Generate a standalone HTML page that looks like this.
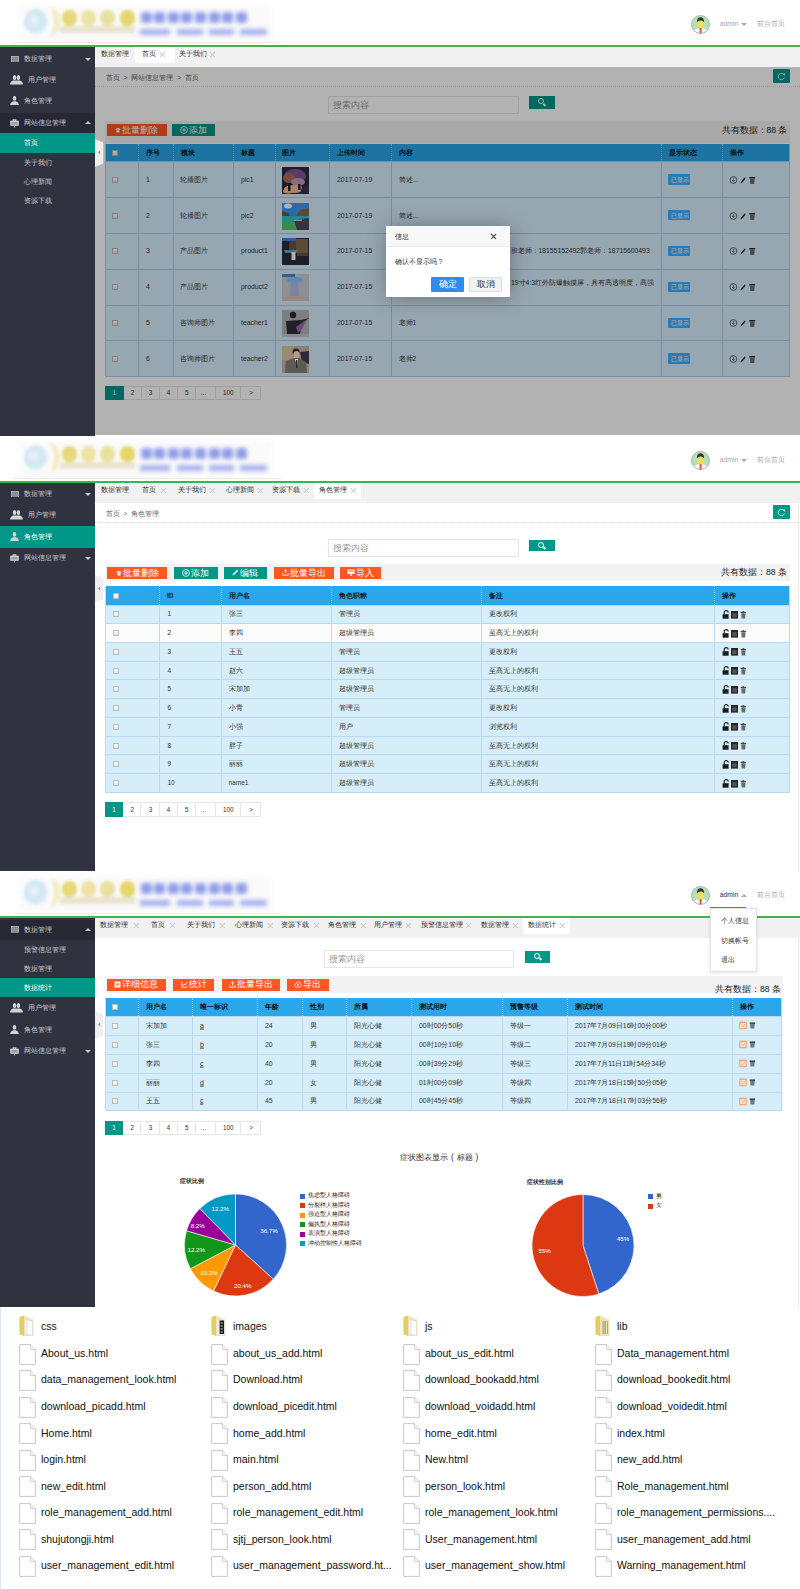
<!DOCTYPE html><html><head><meta charset="utf-8"><style>
*{margin:0;padding:0;box-sizing:border-box}
html,body{width:800px;height:1589px;overflow:hidden;background:#fff;font-family:"Liberation Sans",sans-serif;color:#333}
div{position:absolute}
.t{white-space:nowrap;transform:translateY(-50%);line-height:1}
</style></head><body>
<div style="left:0;top:0px;width:290px;height:45px;"><div style="left:20px;top:5px;width:252px;height:36px;background:#fafafa;filter:blur(2px)"></div><div style="left:13px;top:41.5px;width:268px;height:1px;background:#e6efe6"></div><div style="left:0;top:0;width:290px;height:45px;filter:blur(1.6px)"><div style="left:24px;top:9px;width:24px;height:25px;border-radius:50%;background:radial-gradient(circle at 40% 45%,#e8f3f9 0,#d0e6f3 45%,#dcedf6 65%,rgba(255,255,255,0) 100%)"></div><div style="left:38px;top:7px;width:22px;height:29px;border-radius:50%;border-right:6px solid #f2ebc0"></div><div style="left:61.5px;top:10px;width:15px;height:15.5px;border-radius:45%;background:#e6d97a"></div><div style="left:81.2px;top:10px;width:15px;height:15.5px;border-radius:45%;background:#ede3a4"></div><div style="left:99.5px;top:10px;width:15px;height:15.5px;border-radius:45%;background:#eae09e"></div><div style="left:119.5px;top:10px;width:15px;height:15.5px;border-radius:45%;background:#e5d66c"></div><div style="left:60px;top:26px;width:75px;height:7px;background:#e9e4d0"></div></div><div style="left:0;top:0;width:290px;height:45px;filter:blur(2px)"><div style="left:140.5px;top:11.5px;width:11px;height:11.5px;border-radius:3px;background:#8f9de9"></div><div style="left:154.1px;top:11.5px;width:11px;height:11.5px;border-radius:3px;background:#8f9de9"></div><div style="left:167.7px;top:11.5px;width:11px;height:11.5px;border-radius:3px;background:#8f9de9"></div><div style="left:181.3px;top:11.5px;width:11px;height:11.5px;border-radius:3px;background:#8f9de9"></div><div style="left:194.9px;top:11.5px;width:11px;height:11.5px;border-radius:3px;background:#8f9de9"></div><div style="left:208.5px;top:11.5px;width:11px;height:11.5px;border-radius:3px;background:#8f9de9"></div><div style="left:222.1px;top:11.5px;width:11px;height:11.5px;border-radius:3px;background:#8f9de9"></div><div style="left:235.7px;top:11.5px;width:11px;height:11.5px;border-radius:3px;background:#8f9de9"></div><div style="left:140px;top:28.5px;width:30px;height:6px;background:#a8b2ee"></div><div style="left:177px;top:28.5px;width:26px;height:6px;background:#a8b2ee"></div><div style="left:209px;top:28.5px;width:25px;height:6px;background:#a8b2ee"></div><div style="left:240px;top:28.5px;width:27px;height:6px;background:#a8b2ee"></div></div></div><svg style="position:absolute;left:691px;top:15px" width="19" height="19" viewBox="0 0 19 19"><defs><clipPath id="av0"><circle cx="9.5" cy="9.5" r="9"/></clipPath></defs><circle cx="9.5" cy="9.5" r="9" fill="#b6e0b4"/><g clip-path="url(#av0)"><path d="M1,19 Q2,13.5 9.5,13 Q17,13.5 18,19 Z" fill="#f4f8fa"/><rect x="8.6" y="13" width="2" height="6" fill="#f0521e"/><ellipse cx="9.5" cy="9" rx="3.2" ry="3.8" fill="#f2dc5a"/><path d="M5.8,7.2 Q6,2.2 9.5,2.2 Q13,2.2 13.2,7.2 Q11.5,5.2 9.5,5.6 Q7.5,5.2 5.8,7.2 Z" fill="#1f3a44"/></g><circle cx="9.5" cy="9.5" r="9" fill="none" stroke="#9aa7b0" stroke-width="0.8"/></svg><div class="t" style="left:719.8px;top:24px;font-size:6.8px;color:#a8a8a8">admin</div><div style="left:741px;top:23px;width:0;height:0;border-left:3px solid transparent;border-right:3px solid transparent;border-top:3px solid #aaa"></div><div class="t" style="left:756.5px;top:24px;font-size:6.8px;color:#aaa">前台首页</div><div style="left:0px;top:45px;width:800px;height:2px;background:#3db54a"></div><div style="left:0px;top:47px;width:95px;height:389px;background:#30323f"></div><div class="t" style="left:24px;top:58.8px;font-size:6.6px;color:#c6c7cc">数据管理</div><svg style="position:absolute;left:10.5px;top:55.5px" width="8" height="6.6" viewBox="0 0 8 6.6"><rect x="0.4" y="0.4" width="7.2" height="5.8" fill="#5a5c66" stroke="#c8c8c8" stroke-width="0.8"/><path d="M2.2,0.4 L2.2,6.2 M4,0.4 L4,6.2 M5.8,0.4 L5.8,6.2 M0.4,2.3 L7.6,2.3 M0.4,4.3 L7.6,4.3" stroke="#b8b8b8" stroke-width="0.6"/></svg><div style="left:85px;top:57.8px;width:0;height:0;border-left:3px solid transparent;border-right:3px solid transparent;border-top:3px solid #ccc"></div><div class="t" style="left:28px;top:80px;font-size:6.6px;color:#c6c7cc">用户管理</div><svg style="position:absolute;left:10px;top:75px" width="13" height="9.5" viewBox="0 0 13 9.5"><g fill="#d4d4d4"><ellipse cx="4.6" cy="2.6" rx="1.7" ry="2.6"/><ellipse cx="8.4" cy="2.6" rx="1.7" ry="2.6"/><path d="M0,9.5 Q0.5,6.2 3.2,5.6 L6.5,5.4 L9.8,5.6 Q12.5,6.2 13,9.5 Z"/></g></svg><div class="t" style="left:24px;top:101px;font-size:6.6px;color:#c6c7cc">角色管理</div><svg style="position:absolute;left:9.8px;top:96.2px" width="9" height="9" viewBox="0 0 9 9"><g fill="#d4d4d4"><ellipse cx="4.5" cy="2.4" rx="1.8" ry="2.4"/><path d="M0,9 Q0.6,5.8 3.2,5.3 L5.8,5.3 Q8.4,5.8 9,9 Z"/></g></svg><div style="left:0px;top:112.5px;width:95px;height:20px;background:#262834"></div><div class="t" style="left:24px;top:122.5px;font-size:6.6px;color:#c6c7cc">网站信息管理</div><svg style="position:absolute;left:10px;top:118.5px" width="9" height="9" viewBox="0 0 9 9"><rect x="3" y="0.3" width="3" height="1.4" fill="none" stroke="#ddd" stroke-width="0.6"/><rect x="0.3" y="1.7" width="8.4" height="5" fill="#e6e6e6"/><rect x="1.3" y="2.7" width="6.4" height="3" fill="#9a9ca6"/><rect x="4" y="6.7" width="1" height="1.8" fill="#ddd"/></svg><div style="left:85px;top:120.5px;width:0;height:0;border-left:3px solid transparent;border-right:3px solid transparent;border-bottom:3px solid #ccc"></div><div style="left:0px;top:133.2px;width:95px;height:19.5px;background:#009688"></div><div class="t" style="left:24px;top:143px;font-size:6.6px;color:#fff">首页</div><div class="t" style="left:24px;top:163px;font-size:6.6px;color:#c6c7cc">关于我们</div><div class="t" style="left:24px;top:182px;font-size:6.6px;color:#c6c7cc">心理新闻</div><div class="t" style="left:24px;top:201px;font-size:6.6px;color:#c6c7cc">资源下载</div><div style="left:95px;top:47px;width:705px;height:20px;background:#f1f1f1"></div><div style="left:135px;top:47px;width:39.5px;height:16px;background:#fff"></div><div class="t" style="left:101px;top:54px;font-size:6.5px;color:#333">数据管理</div><div class="t" style="left:142px;top:54px;font-size:6.5px;color:#333">首页</div><div style="left:159.12px;top:53.7px;width:6.760000000000001px;height:0.6px;background:#cdcdcd;transform:rotate(45deg)"></div><div style="left:159.12px;top:53.7px;width:6.760000000000001px;height:0.6px;background:#cdcdcd;transform:rotate(-45deg)"></div><div class="t" style="left:178.5px;top:54px;font-size:6.5px;color:#333">关于我们</div><div style="left:208.62px;top:53.7px;width:6.760000000000001px;height:0.6px;background:#cdcdcd;transform:rotate(45deg)"></div><div style="left:208.62px;top:53.7px;width:6.760000000000001px;height:0.6px;background:#cdcdcd;transform:rotate(-45deg)"></div><div style="left:95px;top:67px;width:705px;height:368.5px;background:#fff"></div><div class="t" style="left:105.5px;top:77.5px;font-size:6.5px;color:#666;word-spacing:2.2px">首页 &gt; 网站信息管理 &gt; 首页</div><div style="left:95px;top:86px;width:705px;height:1px;border-top:1px dotted #ddd"></div><div style="left:773px;top:69px;width:17px;height:14px;background:#009688;border-radius:1px"></div><svg style="position:absolute;left:777px;top:71.5px" width="9" height="9" viewBox="0 0 9 9"><path d="M7.3,3.2 A3.2,3.2 0 1 0 7.4,5.6" fill="none" stroke="#eef" stroke-width="0.9"/><path d="M6.2,1.4 L8.2,1.6 L7.6,3.8 Z" fill="#eef"/></svg><div style="left:328px;top:96.4px;width:190.60000000000002px;height:18.0px;border:1px solid #e6e6e6;background:#fff"></div><div class="t" style="left:333px;top:105.4px;font-size:8.6px;color:#999">搜索内容</div><div style="left:528.7px;top:96px;width:26.299999999999955px;height:12.700000000000003px;background:#009688"></div><div style="left:537.85px;top:98.35px;width:6px;height:6px;border:1.5px solid #fff;border-radius:50%"></div><div style="left:542.85px;top:103.85px;width:3px;height:1.6px;background:#fff;transform:rotate(45deg)"></div><div style="left:105px;top:120.5px;width:684.6px;height:22px;background:#f3f3f3"></div><div style="left:107px;top:124.4px;width:59.80000000000001px;height:11.5px;background:#ff5722;display:flex;align-items:center;justify-content:center;white-space:nowrap;font-size:8.9px;line-height:1;color:#fff"><svg style="display:inline-block;vertical-align:middle;margin-right:1px;position:relative;top:-0.5px" width="6" height="6" viewBox="0 0 6 6"><path d="M0.5,2.2 Q3,0 5.5,2.2 L5,3 Q3,2 1,3 Z" fill="#fff"/><rect x="1.5" y="3.2" width="3" height="2.3" fill="#fff"/></svg>批量删除</div><div style="left:172px;top:124.4px;width:43px;height:11.5px;background:#009688;display:flex;align-items:center;justify-content:center;white-space:nowrap;font-size:8.9px;line-height:1;color:#fff"><svg style="display:inline-block;vertical-align:middle;margin-right:1px;position:relative;top:-0.5px" width="8" height="8" viewBox="0 0 8 8"><circle cx="4" cy="4" r="3.4" fill="none" stroke="#fff" stroke-width="0.8"/><path d="M4,2 L4,6 M2,4 L6,4" stroke="#fff" stroke-width="0.8"/></svg>添加</div><div class="t" style="right:12.5px;top:130px;font-size:8.6px;color:#222">共有数据：88 条</div><div style="left:105px;top:143.6px;width:684.6px;height:18px;background:#2aa6ea"></div><div style="left:105px;top:161.6px;width:684.6px;height:36.0px;background:#d9f0ff"></div><div style="left:105px;top:197.6px;width:684.6px;height:35.80000000000001px;background:#d9f0ff"></div><div style="left:105px;top:233.4px;width:684.6px;height:35.99999999999997px;background:#d9f0ff"></div><div style="left:105px;top:269.4px;width:684.6px;height:35.700000000000045px;background:#d9f0ff"></div><div style="left:105px;top:305.1px;width:684.6px;height:35.599999999999966px;background:#d9f0ff"></div><div style="left:105px;top:340.7px;width:684.6px;height:36.0px;background:#d9f0ff"></div><div style="left:105px;top:161.1px;width:684.6px;height:1px;background:#b4c8ea"></div><div style="left:105px;top:197.1px;width:684.6px;height:1px;background:#b4c8ea"></div><div style="left:105px;top:232.9px;width:684.6px;height:1px;background:#b4c8ea"></div><div style="left:105px;top:268.9px;width:684.6px;height:1px;background:#b4c8ea"></div><div style="left:105px;top:304.6px;width:684.6px;height:1px;background:#b4c8ea"></div><div style="left:105px;top:340.2px;width:684.6px;height:1px;background:#b4c8ea"></div><div style="left:105px;top:376.2px;width:684.6px;height:1px;background:#b4c8ea"></div><div style="left:104.5px;top:161.6px;width:1px;height:215.1px;background:#b4c8ea"></div><div style="left:138.0px;top:161.6px;width:1px;height:215.1px;background:#b4c8ea"></div><div style="left:173.0px;top:161.6px;width:1px;height:215.1px;background:#b4c8ea"></div><div style="left:233.0px;top:161.6px;width:1px;height:215.1px;background:#b4c8ea"></div><div style="left:274.5px;top:161.6px;width:1px;height:215.1px;background:#b4c8ea"></div><div style="left:329.0px;top:161.6px;width:1px;height:215.1px;background:#b4c8ea"></div><div style="left:391.0px;top:161.6px;width:1px;height:215.1px;background:#b4c8ea"></div><div style="left:661.0px;top:161.6px;width:1px;height:215.1px;background:#b4c8ea"></div><div style="left:722.0px;top:161.6px;width:1px;height:215.1px;background:#b4c8ea"></div><div style="left:789.1px;top:161.6px;width:1px;height:215.1px;background:#b4c8ea"></div><div style="left:138.0px;top:143.6px;width:0px;height:18px;border-left:1px dotted rgba(255,255,255,0.45)"></div><div style="left:173.0px;top:143.6px;width:0px;height:18px;border-left:1px dotted rgba(255,255,255,0.45)"></div><div style="left:233.0px;top:143.6px;width:0px;height:18px;border-left:1px dotted rgba(255,255,255,0.45)"></div><div style="left:274.5px;top:143.6px;width:0px;height:18px;border-left:1px dotted rgba(255,255,255,0.45)"></div><div style="left:329.0px;top:143.6px;width:0px;height:18px;border-left:1px dotted rgba(255,255,255,0.45)"></div><div style="left:391.0px;top:143.6px;width:0px;height:18px;border-left:1px dotted rgba(255,255,255,0.45)"></div><div style="left:661.0px;top:143.6px;width:0px;height:18px;border-left:1px dotted rgba(255,255,255,0.45)"></div><div style="left:722.0px;top:143.6px;width:0px;height:18px;border-left:1px dotted rgba(255,255,255,0.45)"></div><div style="left:104.5px;top:143.6px;width:1px;height:233.1px;background:#b4c8ea"></div><div style="left:789.1px;top:143.6px;width:1px;height:233.1px;background:#b4c8ea"></div><div class="t" style="left:145.8px;top:152.6px;font-size:6.5px;color:#111;font-weight:bold">序号</div><div class="t" style="left:180.8px;top:152.6px;font-size:6.5px;color:#111;font-weight:bold">模块</div><div class="t" style="left:240.8px;top:152.6px;font-size:6.5px;color:#111;font-weight:bold">标题</div><div class="t" style="left:282.3px;top:152.6px;font-size:6.5px;color:#111;font-weight:bold">图片</div><div class="t" style="left:336.8px;top:152.6px;font-size:6.5px;color:#111;font-weight:bold">上传时间</div><div class="t" style="left:398.8px;top:152.6px;font-size:6.5px;color:#111;font-weight:bold">内容</div><div class="t" style="left:668.8px;top:152.6px;font-size:6.5px;color:#111;font-weight:bold">显示状态</div><div class="t" style="left:729.8px;top:152.6px;font-size:6.5px;color:#111;font-weight:bold">操作</div><div style="left:112px;top:149.6px;width:6px;height:6px;border:1px solid #bbb;background:linear-gradient(#fff,#e6e6e6)"></div><div style="left:112px;top:176.6px;width:6px;height:6px;border:1px solid #bbb;background:linear-gradient(#fff,#e6e6e6)"></div><div class="t" style="left:146px;top:179.6px;font-size:6.9px;color:#333">1</div><div class="t" style="left:179.5px;top:179.6px;font-size:6.8px;color:#333">轮播图片</div><div class="t" style="left:241px;top:179.6px;font-size:6.9px;color:#333">pic1</div><div class="t" style="left:337px;top:179.6px;font-size:6.9px;color:#333">2017-07-19</div><div class="t" style="left:398.5px;top:179.6px;font-size:6.6px;color:#333">简述...</div><div style="left:668.3px;top:174.29999999999998px;width:22.2px;height:10.3px;background:#42b0ff;border-radius:1px"></div><div class="t" style="left:670.5px;top:179.6px;font-size:6.1px;color:#fff">已显示</div><svg style="position:absolute;left:729px;top:174.6px" width="28" height="10" viewBox="0 0 28 10"><circle cx="4.4" cy="5" r="3.4" fill="none" stroke="#444" stroke-width="0.8"/><path d="M4.4,2.8 L4.4,6.2 M3,5 L4.4,6.5 L5.8,5" fill="none" stroke="#444" stroke-width="0.7"/><path d="M11.5,8.6 L12,6.8 L15.6,2.6 L16.6,3.5 L13,7.7 Z" fill="#1a1a1a"/><rect x="20.3" y="2" width="5.9" height="1.4" fill="#222"/><path d="M20.8,3.6 L25.7,3.6 L25.2,8.9 L21.3,8.9 Z" fill="#6d6d6d"/></svg><div style="left:112px;top:212.5px;width:6px;height:6px;border:1px solid #bbb;background:linear-gradient(#fff,#e6e6e6)"></div><div class="t" style="left:146px;top:215.5px;font-size:6.9px;color:#333">2</div><div class="t" style="left:179.5px;top:215.5px;font-size:6.8px;color:#333">轮播图片</div><div class="t" style="left:241px;top:215.5px;font-size:6.9px;color:#333">pic2</div><div class="t" style="left:337px;top:215.5px;font-size:6.9px;color:#333">2017-07-19</div><div class="t" style="left:398.5px;top:215.5px;font-size:6.6px;color:#333">简述...</div><div style="left:668.3px;top:210.2px;width:22.2px;height:10.3px;background:#42b0ff;border-radius:1px"></div><div class="t" style="left:670.5px;top:215.5px;font-size:6.1px;color:#fff">已显示</div><svg style="position:absolute;left:729px;top:210.5px" width="28" height="10" viewBox="0 0 28 10"><circle cx="4.4" cy="5" r="3.4" fill="none" stroke="#444" stroke-width="0.8"/><path d="M4.4,2.8 L4.4,6.2 M3,5 L4.4,6.5 L5.8,5" fill="none" stroke="#444" stroke-width="0.7"/><path d="M11.5,8.6 L12,6.8 L15.6,2.6 L16.6,3.5 L13,7.7 Z" fill="#1a1a1a"/><rect x="20.3" y="2" width="5.9" height="1.4" fill="#222"/><path d="M20.8,3.6 L25.7,3.6 L25.2,8.9 L21.3,8.9 Z" fill="#6d6d6d"/></svg><div style="left:112px;top:248.39999999999998px;width:6px;height:6px;border:1px solid #bbb;background:linear-gradient(#fff,#e6e6e6)"></div><div class="t" style="left:146px;top:251.39999999999998px;font-size:6.9px;color:#333">3</div><div class="t" style="left:179.5px;top:251.39999999999998px;font-size:6.8px;color:#333">产品图片</div><div class="t" style="left:241px;top:251.39999999999998px;font-size:6.9px;color:#333">product1</div><div class="t" style="left:337px;top:251.39999999999998px;font-size:6.9px;color:#333">2017-07-15</div><div class="t" style="left:398.5px;top:251.39999999999998px;font-size:6.6px;color:#333">阳光心理健康咨询中心联系</div><div class="t" style="left:510.5px;top:251.39999999999998px;font-size:6.8px;color:#333">班老师：18155152492郭老师：18715600493</div><div style="left:668.3px;top:246.09999999999997px;width:22.2px;height:10.3px;background:#42b0ff;border-radius:1px"></div><div class="t" style="left:670.5px;top:251.39999999999998px;font-size:6.1px;color:#fff">已显示</div><svg style="position:absolute;left:729px;top:246.39999999999998px" width="28" height="10" viewBox="0 0 28 10"><circle cx="4.4" cy="5" r="3.4" fill="none" stroke="#444" stroke-width="0.8"/><path d="M4.4,2.8 L4.4,6.2 M3,5 L4.4,6.5 L5.8,5" fill="none" stroke="#444" stroke-width="0.7"/><path d="M11.5,8.6 L12,6.8 L15.6,2.6 L16.6,3.5 L13,7.7 Z" fill="#1a1a1a"/><rect x="20.3" y="2" width="5.9" height="1.4" fill="#222"/><path d="M20.8,3.6 L25.7,3.6 L25.2,8.9 L21.3,8.9 Z" fill="#6d6d6d"/></svg><div style="left:112px;top:284.25px;width:6px;height:6px;border:1px solid #bbb;background:linear-gradient(#fff,#e6e6e6)"></div><div class="t" style="left:146px;top:287.25px;font-size:6.9px;color:#333">4</div><div class="t" style="left:179.5px;top:287.25px;font-size:6.8px;color:#333">产品图片</div><div class="t" style="left:241px;top:287.25px;font-size:6.9px;color:#333">product2</div><div class="t" style="left:337px;top:287.25px;font-size:6.9px;color:#333">2017-07-15</div><div class="t" style="left:398.5px;top:283.25px;font-size:6.6px;color:#333">产品简述：本产品采用</div><div class="t" style="left:511px;top:282.95px;font-size:6.8px;color:#333">19寸4:3红外防爆触摸屏，具有高透明度，高强</div><div style="left:668.3px;top:281.95px;width:22.2px;height:10.3px;background:#42b0ff;border-radius:1px"></div><div class="t" style="left:670.5px;top:287.25px;font-size:6.1px;color:#fff">已显示</div><svg style="position:absolute;left:729px;top:282.25px" width="28" height="10" viewBox="0 0 28 10"><circle cx="4.4" cy="5" r="3.4" fill="none" stroke="#444" stroke-width="0.8"/><path d="M4.4,2.8 L4.4,6.2 M3,5 L4.4,6.5 L5.8,5" fill="none" stroke="#444" stroke-width="0.7"/><path d="M11.5,8.6 L12,6.8 L15.6,2.6 L16.6,3.5 L13,7.7 Z" fill="#1a1a1a"/><rect x="20.3" y="2" width="5.9" height="1.4" fill="#222"/><path d="M20.8,3.6 L25.7,3.6 L25.2,8.9 L21.3,8.9 Z" fill="#6d6d6d"/></svg><div style="left:112px;top:319.9px;width:6px;height:6px;border:1px solid #bbb;background:linear-gradient(#fff,#e6e6e6)"></div><div class="t" style="left:146px;top:322.9px;font-size:6.9px;color:#333">5</div><div class="t" style="left:179.5px;top:322.9px;font-size:6.8px;color:#333">咨询师图片</div><div class="t" style="left:241px;top:322.9px;font-size:6.9px;color:#333">teacher1</div><div class="t" style="left:337px;top:322.9px;font-size:6.9px;color:#333">2017-07-15</div><div class="t" style="left:398.5px;top:322.9px;font-size:6.6px;color:#333">老师1</div><div style="left:668.3px;top:317.59999999999997px;width:22.2px;height:10.3px;background:#42b0ff;border-radius:1px"></div><div class="t" style="left:670.5px;top:322.9px;font-size:6.1px;color:#fff">已显示</div><svg style="position:absolute;left:729px;top:317.9px" width="28" height="10" viewBox="0 0 28 10"><circle cx="4.4" cy="5" r="3.4" fill="none" stroke="#444" stroke-width="0.8"/><path d="M4.4,2.8 L4.4,6.2 M3,5 L4.4,6.5 L5.8,5" fill="none" stroke="#444" stroke-width="0.7"/><path d="M11.5,8.6 L12,6.8 L15.6,2.6 L16.6,3.5 L13,7.7 Z" fill="#1a1a1a"/><rect x="20.3" y="2" width="5.9" height="1.4" fill="#222"/><path d="M20.8,3.6 L25.7,3.6 L25.2,8.9 L21.3,8.9 Z" fill="#6d6d6d"/></svg><div style="left:112px;top:355.7px;width:6px;height:6px;border:1px solid #bbb;background:linear-gradient(#fff,#e6e6e6)"></div><div class="t" style="left:146px;top:358.7px;font-size:6.9px;color:#333">6</div><div class="t" style="left:179.5px;top:358.7px;font-size:6.8px;color:#333">咨询师图片</div><div class="t" style="left:241px;top:358.7px;font-size:6.9px;color:#333">teacher2</div><div class="t" style="left:337px;top:358.7px;font-size:6.9px;color:#333">2017-07-15</div><div class="t" style="left:398.5px;top:358.7px;font-size:6.6px;color:#333">老师2</div><div style="left:668.3px;top:353.4px;width:22.2px;height:10.3px;background:#42b0ff;border-radius:1px"></div><div class="t" style="left:670.5px;top:358.7px;font-size:6.1px;color:#fff">已显示</div><svg style="position:absolute;left:729px;top:353.7px" width="28" height="10" viewBox="0 0 28 10"><circle cx="4.4" cy="5" r="3.4" fill="none" stroke="#444" stroke-width="0.8"/><path d="M4.4,2.8 L4.4,6.2 M3,5 L4.4,6.5 L5.8,5" fill="none" stroke="#444" stroke-width="0.7"/><path d="M11.5,8.6 L12,6.8 L15.6,2.6 L16.6,3.5 L13,7.7 Z" fill="#1a1a1a"/><rect x="20.3" y="2" width="5.9" height="1.4" fill="#222"/><path d="M20.8,3.6 L25.7,3.6 L25.2,8.9 L21.3,8.9 Z" fill="#6d6d6d"/></svg><div style="left:105px;top:386px;width:18.5px;height:14px;background:#009688"></div><div class="t" style="left:112.5px;top:393.0px;font-size:6.3px;color:#fff">1</div><div style="left:123.5px;top:386px;width:18.0px;height:14px;border:1px solid #e6e6e6;border-left:0;background:#fff"></div><div class="t" style="left:130.75px;top:393.0px;font-size:6.3px;color:#333">2</div><div style="left:141.5px;top:386px;width:18.0px;height:14px;border:1px solid #e6e6e6;border-left:0;background:#fff"></div><div class="t" style="left:148.75px;top:393.0px;font-size:6.3px;color:#333">3</div><div style="left:159.5px;top:386px;width:18.0px;height:14px;border:1px solid #e6e6e6;border-left:0;background:#fff"></div><div class="t" style="left:166.75px;top:393.0px;font-size:6.3px;color:#333">4</div><div style="left:177.5px;top:386px;width:18.30000000000001px;height:14px;border:1px solid #e6e6e6;border-left:0;background:#fff"></div><div class="t" style="left:184.9px;top:393.0px;font-size:6.3px;color:#333">5</div><div style="left:195.8px;top:386px;width:20.19999999999999px;height:14px;border:1px solid #e6e6e6;border-left:0;background:#fff"></div><div class="t" style="left:200.65px;top:393.0px;font-size:6.3px;color:#333">...</div><div style="left:216px;top:386px;width:24.599999999999994px;height:14px;border:1px solid #e6e6e6;border-left:0;background:#fff"></div><div class="t" style="left:223.05px;top:393.0px;font-size:6.3px;color:#333">100</div><div style="left:240.6px;top:386px;width:20.700000000000017px;height:14px;border:1px solid #e6e6e6;border-left:0;background:#fff"></div><div class="t" style="left:249.2px;top:393.0px;font-size:6.3px;color:#333">&gt;</div><div style="left:95px;top:67px;width:705px;height:368px;background:rgba(0,0,0,0.3)"></div><svg style="position:absolute;left:282.2px;top:166.5px" width="27" height="27" viewBox="0 0 27 27"><rect width="27" height="27" fill="#1e1d2e"/><ellipse cx="13" cy="9" rx="11" ry="7" fill="#5a3a66"/><ellipse cx="7" cy="11" rx="6" ry="5" fill="#7a4a3e"/><ellipse cx="16" cy="15" rx="7" ry="4" fill="#8a6a80"/><ellipse cx="12" cy="22" rx="10" ry="4" fill="#a8846a"/><ellipse cx="6" cy="24" rx="5" ry="2.5" fill="#c8804a"/><rect x="6" y="16" width="2.5" height="8" fill="#151520"/><rect x="16" y="17" width="2.5" height="6" fill="#151520"/><path d="M20,20 L27,16 L27,27 L18,27 Z" fill="#242232"/></svg><svg style="position:absolute;left:282.2px;top:202.5px" width="27" height="27" viewBox="0 0 27 27"><rect width="27" height="27" fill="#2a6aa8"/><ellipse cx="6" cy="3" rx="4" ry="2.5" fill="#a8b4c0"/><path d="M0,8 L6,10 L9,14 L0,14 Z" fill="#4a3a34"/><path d="M14,13 L18,7 L27,5 L27,14 Z" fill="#5e4a34"/><rect x="0" y="13" width="27" height="8" fill="#1f8a8a"/><path d="M0,18 L14,19 L16,27 L0,27 Z" fill="#3a8a4a"/><path d="M12,17 L27,15 L27,27 L15,27 Z" fill="#38323c"/><rect x="12" y="16.5" width="8" height="1.5" fill="#8a8a90"/></svg><svg style="position:absolute;left:282.2px;top:238.3px" width="27" height="27" viewBox="0 0 27 27"><rect width="27" height="27" fill="#1c1e2c"/><rect x="0" y="0" width="14" height="3" fill="#2a5aa0"/><rect x="14" y="1" width="12" height="14" fill="#5a4a38"/><rect x="7" y="3" width="7" height="9" fill="#4a3a30"/><path d="M2,12 L16,12 L14,15 L3,15 Z" fill="#3a7a8a"/><rect x="9.5" y="14" width="4" height="8" fill="#b8b098"/><rect x="15" y="15" width="11" height="3" fill="#4a3a2c"/></svg><svg style="position:absolute;left:282.2px;top:274.29999999999995px" width="27" height="27" viewBox="0 0 27 27"><rect width="27" height="27" fill="#8c9096"/><rect x="0" y="0" width="13" height="3" fill="#3a5a90"/><ellipse cx="13" cy="6" rx="8" ry="3" fill="#5a8ab0"/><path d="M9,8 L16,8 L17,22 L8,22 Z" fill="#7a84a0"/><rect x="0" y="22" width="27" height="5" fill="#988a80"/></svg><svg style="position:absolute;left:282.2px;top:310.0px" width="27" height="27" viewBox="0 0 27 27"><rect width="27" height="27" fill="#7e7e80"/><circle cx="11" cy="5" r="3.2" fill="#1e1c26"/><path d="M4,11 L19,10 L27,8 L20,14 L18,24 L5,24 Z" fill="#20202a"/><path d="M14,17 L25,9 L20,19 L16,23 Z" fill="#6a4a78"/><rect x="0" y="24" width="27" height="3" fill="#8a8a8c"/></svg><svg style="position:absolute;left:282.2px;top:345.59999999999997px" width="27" height="27" viewBox="0 0 27 27"><rect width="27" height="27" fill="#8a8070"/><rect x="0" y="0" width="12" height="14" fill="#9a8a70"/><path d="M18,6 L27,5 L27,18 L20,16 Z" fill="#2a2a34"/><circle cx="14" cy="6" r="3.5" fill="#1e1e26"/><ellipse cx="14.5" cy="9" rx="3.2" ry="4" fill="#b89888"/><path d="M3,27 L4,15 L12,12 L17,12 L24,16 L25,27 Z" fill="#5c5a52"/><path d="M13,13 L16,13 L15,20 Z" fill="#d8d8d8"/><rect x="14" y="14" width="1.3" height="8" fill="#2a2a30"/></svg><svg style="position:absolute;left:95px;top:139px" width="9" height="28" viewBox="0 0 9 28"><path d="M0,0 L8.2,3.5 L8.2,24.5 L0,28 Z" fill="#efefef"/><path d="M2.8,13.5 L5.2,11.2 L5.2,15.8 Z" fill="#a0a0a0"/></svg><div style="left:386px;top:226px;width:123.5px;height:71px;background:#fff;box-shadow:1px 1px 20px rgba(0,0,0,0.3)"></div><div style="left:386px;top:226px;width:123.5px;height:21px;background:#f8f8f8;border-bottom:1px solid #eee"></div><div class="t" style="left:395px;top:236.5px;font-size:6.6px;color:#333">信息</div><div style="left:490.425px;top:236.05px;width:7.15px;height:0.9px;background:#333;transform:rotate(45deg)"></div><div style="left:490.425px;top:236.05px;width:7.15px;height:0.9px;background:#333;transform:rotate(-45deg)"></div><div class="t" style="left:395px;top:262px;font-size:6.8px;color:#333">确认不显示吗？</div><div style="left:431.3px;top:277px;width:32.5px;height:14.5px;background:#2e8ded;border-radius:1px"></div><div class="t" style="left:438.5px;top:284.3px;font-size:8.9px;color:#fff">确定</div><div style="left:469px;top:277px;width:32.5px;height:14.5px;background:#f1f1f1;border:1px solid #dedede;border-radius:1px"></div><div class="t" style="left:476.5px;top:284.3px;font-size:8.9px;color:#333">取消</div>
<div style="left:0px;top:436px;width:800px;height:435px;background:#fff"></div><div style="left:0;top:436px;width:290px;height:45px;"><div style="left:20px;top:5px;width:252px;height:36px;background:#fafafa;filter:blur(2px)"></div><div style="left:13px;top:41.5px;width:268px;height:1px;background:#e6efe6"></div><div style="left:0;top:0;width:290px;height:45px;filter:blur(1.6px)"><div style="left:24px;top:9px;width:24px;height:25px;border-radius:50%;background:radial-gradient(circle at 40% 45%,#e8f3f9 0,#d0e6f3 45%,#dcedf6 65%,rgba(255,255,255,0) 100%)"></div><div style="left:38px;top:7px;width:22px;height:29px;border-radius:50%;border-right:6px solid #f2ebc0"></div><div style="left:61.5px;top:10px;width:15px;height:15.5px;border-radius:45%;background:#e6d97a"></div><div style="left:81.2px;top:10px;width:15px;height:15.5px;border-radius:45%;background:#ede3a4"></div><div style="left:99.5px;top:10px;width:15px;height:15.5px;border-radius:45%;background:#eae09e"></div><div style="left:119.5px;top:10px;width:15px;height:15.5px;border-radius:45%;background:#e5d66c"></div><div style="left:60px;top:26px;width:75px;height:7px;background:#e9e4d0"></div></div><div style="left:0;top:0;width:290px;height:45px;filter:blur(2px)"><div style="left:140.5px;top:11.5px;width:11px;height:11.5px;border-radius:3px;background:#8f9de9"></div><div style="left:154.1px;top:11.5px;width:11px;height:11.5px;border-radius:3px;background:#8f9de9"></div><div style="left:167.7px;top:11.5px;width:11px;height:11.5px;border-radius:3px;background:#8f9de9"></div><div style="left:181.3px;top:11.5px;width:11px;height:11.5px;border-radius:3px;background:#8f9de9"></div><div style="left:194.9px;top:11.5px;width:11px;height:11.5px;border-radius:3px;background:#8f9de9"></div><div style="left:208.5px;top:11.5px;width:11px;height:11.5px;border-radius:3px;background:#8f9de9"></div><div style="left:222.1px;top:11.5px;width:11px;height:11.5px;border-radius:3px;background:#8f9de9"></div><div style="left:235.7px;top:11.5px;width:11px;height:11.5px;border-radius:3px;background:#8f9de9"></div><div style="left:140px;top:28.5px;width:30px;height:6px;background:#a8b2ee"></div><div style="left:177px;top:28.5px;width:26px;height:6px;background:#a8b2ee"></div><div style="left:209px;top:28.5px;width:25px;height:6px;background:#a8b2ee"></div><div style="left:240px;top:28.5px;width:27px;height:6px;background:#a8b2ee"></div></div></div><svg style="position:absolute;left:691px;top:451px" width="19" height="19" viewBox="0 0 19 19"><defs><clipPath id="av436"><circle cx="9.5" cy="9.5" r="9"/></clipPath></defs><circle cx="9.5" cy="9.5" r="9" fill="#b6e0b4"/><g clip-path="url(#av436)"><path d="M1,19 Q2,13.5 9.5,13 Q17,13.5 18,19 Z" fill="#f4f8fa"/><rect x="8.6" y="13" width="2" height="6" fill="#f0521e"/><ellipse cx="9.5" cy="9" rx="3.2" ry="3.8" fill="#f2dc5a"/><path d="M5.8,7.2 Q6,2.2 9.5,2.2 Q13,2.2 13.2,7.2 Q11.5,5.2 9.5,5.6 Q7.5,5.2 5.8,7.2 Z" fill="#1f3a44"/></g><circle cx="9.5" cy="9.5" r="9" fill="none" stroke="#9aa7b0" stroke-width="0.8"/></svg><div class="t" style="left:719.8px;top:460px;font-size:6.8px;color:#a8a8a8">admin</div><div style="left:741px;top:459px;width:0;height:0;border-left:3px solid transparent;border-right:3px solid transparent;border-top:3px solid #aaa"></div><div class="t" style="left:756.5px;top:460px;font-size:6.8px;color:#aaa">前台首页</div><div style="left:0px;top:481px;width:800px;height:2px;background:#3db54a"></div><div style="left:0px;top:483px;width:95px;height:389px;background:#30323f"></div><div class="t" style="left:24px;top:494px;font-size:6.6px;color:#c6c7cc">数据管理</div><svg style="position:absolute;left:10.5px;top:490.7px" width="8" height="6.6" viewBox="0 0 8 6.6"><rect x="0.4" y="0.4" width="7.2" height="5.8" fill="#5a5c66" stroke="#c8c8c8" stroke-width="0.8"/><path d="M2.2,0.4 L2.2,6.2 M4,0.4 L4,6.2 M5.8,0.4 L5.8,6.2 M0.4,2.3 L7.6,2.3 M0.4,4.3 L7.6,4.3" stroke="#b8b8b8" stroke-width="0.6"/></svg><div style="left:85px;top:493px;width:0;height:0;border-left:3px solid transparent;border-right:3px solid transparent;border-top:3px solid #ccc"></div><div class="t" style="left:28px;top:515.2px;font-size:6.6px;color:#c6c7cc">用户管理</div><svg style="position:absolute;left:10px;top:510.20000000000005px" width="13" height="9.5" viewBox="0 0 13 9.5"><g fill="#d4d4d4"><ellipse cx="4.6" cy="2.6" rx="1.7" ry="2.6"/><ellipse cx="8.4" cy="2.6" rx="1.7" ry="2.6"/><path d="M0,9.5 Q0.5,6.2 3.2,5.6 L6.5,5.4 L9.8,5.6 Q12.5,6.2 13,9.5 Z"/></g></svg><div style="left:0px;top:526.0px;width:95px;height:21.7px;background:#009688"></div><div class="t" style="left:24px;top:536.5px;font-size:6.6px;color:#fff">角色管理</div><svg style="position:absolute;left:9.8px;top:531.7px" width="9" height="9" viewBox="0 0 9 9"><g fill="#d4d4d4"><ellipse cx="4.5" cy="2.4" rx="1.8" ry="2.4"/><path d="M0,9 Q0.6,5.8 3.2,5.3 L5.8,5.3 Q8.4,5.8 9,9 Z"/></g></svg><div class="t" style="left:24px;top:558px;font-size:6.6px;color:#c6c7cc">网站信息管理</div><svg style="position:absolute;left:10px;top:554px" width="9" height="9" viewBox="0 0 9 9"><rect x="3" y="0.3" width="3" height="1.4" fill="none" stroke="#ddd" stroke-width="0.6"/><rect x="0.3" y="1.7" width="8.4" height="5" fill="#e6e6e6"/><rect x="1.3" y="2.7" width="6.4" height="3" fill="#9a9ca6"/><rect x="4" y="6.7" width="1" height="1.8" fill="#ddd"/></svg><div style="left:85px;top:557px;width:0;height:0;border-left:3px solid transparent;border-right:3px solid transparent;border-top:3px solid #ccc"></div><div style="left:95px;top:483px;width:705px;height:20px;background:#f1f1f1"></div><div style="left:314px;top:483px;width:47px;height:16px;background:#fff"></div><div class="t" style="left:101px;top:490px;font-size:6.5px;color:#333">数据管理</div><div class="t" style="left:142px;top:490px;font-size:6.5px;color:#333">首页</div><div style="left:159.62px;top:489.7px;width:6.760000000000001px;height:0.6px;background:#cdcdcd;transform:rotate(45deg)"></div><div style="left:159.62px;top:489.7px;width:6.760000000000001px;height:0.6px;background:#cdcdcd;transform:rotate(-45deg)"></div><div class="t" style="left:178px;top:490px;font-size:6.5px;color:#333">关于我们</div><div style="left:208.62px;top:489.7px;width:6.760000000000001px;height:0.6px;background:#cdcdcd;transform:rotate(45deg)"></div><div style="left:208.62px;top:489.7px;width:6.760000000000001px;height:0.6px;background:#cdcdcd;transform:rotate(-45deg)"></div><div class="t" style="left:226px;top:490px;font-size:6.5px;color:#333">心理新闻</div><div style="left:256.62px;top:489.7px;width:6.760000000000001px;height:0.6px;background:#cdcdcd;transform:rotate(45deg)"></div><div style="left:256.62px;top:489.7px;width:6.760000000000001px;height:0.6px;background:#cdcdcd;transform:rotate(-45deg)"></div><div class="t" style="left:272px;top:490px;font-size:6.5px;color:#333">资源下载</div><div style="left:302.62px;top:489.7px;width:6.760000000000001px;height:0.6px;background:#cdcdcd;transform:rotate(45deg)"></div><div style="left:302.62px;top:489.7px;width:6.760000000000001px;height:0.6px;background:#cdcdcd;transform:rotate(-45deg)"></div><div class="t" style="left:319px;top:490px;font-size:6.5px;color:#333">角色管理</div><div style="left:349.62px;top:489.7px;width:6.760000000000001px;height:0.6px;background:#cdcdcd;transform:rotate(45deg)"></div><div style="left:349.62px;top:489.7px;width:6.760000000000001px;height:0.6px;background:#cdcdcd;transform:rotate(-45deg)"></div><div class="t" style="left:105.5px;top:513.5px;font-size:6.5px;color:#666;word-spacing:2.2px">首页 &gt; 角色管理</div><div style="left:95px;top:522px;width:705px;height:1px;border-top:1px dotted #ddd"></div><div style="left:773px;top:505px;width:17px;height:14px;background:#009688;border-radius:1px"></div><svg style="position:absolute;left:777px;top:507.5px" width="9" height="9" viewBox="0 0 9 9"><path d="M7.3,3.2 A3.2,3.2 0 1 0 7.4,5.6" fill="none" stroke="#eef" stroke-width="0.9"/><path d="M6.2,1.4 L8.2,1.6 L7.6,3.8 Z" fill="#eef"/></svg><div style="left:328px;top:539px;width:190.5px;height:17.5px;border:1px solid #e6e6e6;background:#fff"></div><div class="t" style="left:333px;top:547.75px;font-size:8.6px;color:#999">搜索内容</div><div style="left:529px;top:540px;width:26px;height:11px;background:#009688"></div><div style="left:538.0px;top:541.5px;width:6px;height:6px;border:1.5px solid #fff;border-radius:50%"></div><div style="left:543.0px;top:547.0px;width:3px;height:1.6px;background:#fff;transform:rotate(45deg)"></div><div style="left:105px;top:564px;width:684.5px;height:17px;background:#f3f3f3"></div><div style="left:107px;top:567px;width:60px;height:12px;background:#ff5722;display:flex;align-items:center;justify-content:center;white-space:nowrap;font-size:8.9px;line-height:1;color:#fff"><svg style="display:inline-block;vertical-align:middle;margin-right:1px;position:relative;top:-0.5px" width="6" height="6" viewBox="0 0 6 6"><path d="M0.5,2.2 Q3,0 5.5,2.2 L5,3 Q3,2 1,3 Z" fill="#fff"/><rect x="1.5" y="3.2" width="3" height="2.3" fill="#fff"/></svg>批量删除</div><div style="left:174px;top:567px;width:43.599999999999994px;height:12px;background:#009688;display:flex;align-items:center;justify-content:center;white-space:nowrap;font-size:8.9px;line-height:1;color:#fff"><svg style="display:inline-block;vertical-align:middle;margin-right:1px;position:relative;top:-0.5px" width="8" height="8" viewBox="0 0 8 8"><circle cx="4" cy="4" r="3.4" fill="none" stroke="#fff" stroke-width="0.8"/><path d="M4,2 L4,6 M2,4 L6,4" stroke="#fff" stroke-width="0.8"/></svg>添加</div><div style="left:224px;top:567px;width:42.69999999999999px;height:12px;background:#009688;display:flex;align-items:center;justify-content:center;white-space:nowrap;font-size:8.9px;line-height:1;color:#fff"><svg style="display:inline-block;vertical-align:middle;margin-right:1px;position:relative;top:-0.5px" width="7" height="7" viewBox="0 0 7 7"><path d="M0.5,6.5 L0.9,5 L5.2,0.7 L6.3,1.8 L2,6.1 Z" fill="#fff"/></svg>编辑</div><div style="left:274px;top:567px;width:60px;height:12px;background:#ff5722;display:flex;align-items:center;justify-content:center;white-space:nowrap;font-size:8.9px;line-height:1;color:#fff"><svg style="display:inline-block;vertical-align:middle;margin-right:1px;position:relative;top:-0.5px" width="7" height="7" viewBox="0 0 7 7"><path d="M3.5,0.8 L3.5,4.6 M2,2.3 L3.5,0.8 L5,2.3" fill="none" stroke="#fff" stroke-width="0.8"/><path d="M0.8,4 L0.8,6.2 L6.2,6.2 L6.2,4" fill="none" stroke="#fff" stroke-width="0.8"/></svg>批量导出</div><div style="left:340px;top:567px;width:41px;height:12px;background:#ff5722;display:flex;align-items:center;justify-content:center;white-space:nowrap;font-size:8.9px;line-height:1;color:#fff"><svg style="display:inline-block;vertical-align:middle;margin-right:1px;position:relative;top:-0.5px" width="8" height="7" viewBox="0 0 8 7"><rect x="0.5" y="0.5" width="7" height="4.5" fill="#fff"/><rect x="1.5" y="1.5" width="5" height="1" fill="#ff5722"/><rect x="3" y="5.5" width="2" height="1.2" fill="#fff"/></svg>导入</div><div class="t" style="right:13px;top:572px;font-size:8.6px;color:#222">共有数据：88 条</div><div style="left:105px;top:586px;width:684.5px;height:19px;background:#2aa6ea"></div><div style="left:105px;top:605.0px;width:684.5px;height:18.74000000000001px;background:#d6eef9"></div><div style="left:105px;top:623.74px;width:684.5px;height:18.73999999999998px;background:#fbfbfb"></div><div style="left:105px;top:642.48px;width:684.5px;height:18.74000000000001px;background:#d6eef9"></div><div style="left:105px;top:661.22px;width:684.5px;height:18.73999999999998px;background:#d6eef9"></div><div style="left:105px;top:679.96px;width:684.5px;height:18.74000000000001px;background:#d6eef9"></div><div style="left:105px;top:698.7px;width:684.5px;height:18.74000000000001px;background:#d6eef9"></div><div style="left:105px;top:717.44px;width:684.5px;height:18.739999999999952px;background:#d6eef9"></div><div style="left:105px;top:736.18px;width:684.5px;height:18.74000000000001px;background:#d6eef9"></div><div style="left:105px;top:754.92px;width:684.5px;height:18.74000000000001px;background:#d6eef9"></div><div style="left:105px;top:773.66px;width:684.5px;height:18.74000000000001px;background:#d6eef9"></div><div style="left:105px;top:604.5px;width:684.5px;height:1px;background:#bcd8ee"></div><div style="left:105px;top:623.24px;width:684.5px;height:1px;background:#bcd8ee"></div><div style="left:105px;top:641.98px;width:684.5px;height:1px;background:#bcd8ee"></div><div style="left:105px;top:660.72px;width:684.5px;height:1px;background:#bcd8ee"></div><div style="left:105px;top:679.46px;width:684.5px;height:1px;background:#bcd8ee"></div><div style="left:105px;top:698.2px;width:684.5px;height:1px;background:#bcd8ee"></div><div style="left:105px;top:716.94px;width:684.5px;height:1px;background:#bcd8ee"></div><div style="left:105px;top:735.68px;width:684.5px;height:1px;background:#bcd8ee"></div><div style="left:105px;top:754.42px;width:684.5px;height:1px;background:#bcd8ee"></div><div style="left:105px;top:773.16px;width:684.5px;height:1px;background:#bcd8ee"></div><div style="left:105px;top:791.9px;width:684.5px;height:1px;background:#bcd8ee"></div><div style="left:104.5px;top:605.0px;width:1px;height:187.39999999999998px;background:#bcd8ee"></div><div style="left:159.0px;top:605.0px;width:1px;height:187.39999999999998px;background:#bcd8ee"></div><div style="left:220.5px;top:605.0px;width:1px;height:187.39999999999998px;background:#bcd8ee"></div><div style="left:330.5px;top:605.0px;width:1px;height:187.39999999999998px;background:#bcd8ee"></div><div style="left:481.0px;top:605.0px;width:1px;height:187.39999999999998px;background:#bcd8ee"></div><div style="left:713.5px;top:605.0px;width:1px;height:187.39999999999998px;background:#bcd8ee"></div><div style="left:789.0px;top:605.0px;width:1px;height:187.39999999999998px;background:#bcd8ee"></div><div style="left:159.0px;top:586px;width:0px;height:19px;border-left:1px dotted rgba(255,255,255,0.45)"></div><div style="left:220.5px;top:586px;width:0px;height:19px;border-left:1px dotted rgba(255,255,255,0.45)"></div><div style="left:330.5px;top:586px;width:0px;height:19px;border-left:1px dotted rgba(255,255,255,0.45)"></div><div style="left:481.0px;top:586px;width:0px;height:19px;border-left:1px dotted rgba(255,255,255,0.45)"></div><div style="left:713.5px;top:586px;width:0px;height:19px;border-left:1px dotted rgba(255,255,255,0.45)"></div><div style="left:104.5px;top:586px;width:1px;height:206.39999999999998px;background:#bcd8ee"></div><div style="left:789.0px;top:586px;width:1px;height:206.39999999999998px;background:#bcd8ee"></div><div class="t" style="left:167.0px;top:595.5px;font-size:6.5px;color:#111;font-weight:bold">ID</div><div class="t" style="left:228.5px;top:595.5px;font-size:6.5px;color:#111;font-weight:bold">用户名</div><div class="t" style="left:338.5px;top:595.5px;font-size:6.5px;color:#111;font-weight:bold">角色职称</div><div class="t" style="left:489.0px;top:595.5px;font-size:6.5px;color:#111;font-weight:bold">备注</div><div class="t" style="left:721.5px;top:595.5px;font-size:6.5px;color:#111;font-weight:bold">操作</div><div style="left:112.6px;top:592.5px;width:6px;height:6px;border:1px solid #bbb;background:linear-gradient(#fff,#e6e6e6)"></div><div style="left:112.6px;top:611.37px;width:6px;height:6px;border:1px solid #bbb;background:linear-gradient(#fff,#e6e6e6)"></div><div class="t" style="left:167.5px;top:614.37px;font-size:6.5px;color:#333">1</div><div class="t" style="left:228.5px;top:614.37px;font-size:6.5px;color:#333">张三</div><div class="t" style="left:338.5px;top:614.37px;font-size:6.6px;color:#333">管理员</div><div class="t" style="left:489px;top:614.37px;font-size:6.6px;color:#333">更改权利</div><svg style="position:absolute;left:722px;top:609.87px" width="26" height="9" viewBox="0 0 26 9"><path d="M2.2,4.2 L2.2,2.6 A2,2 0 0 1 6.2,2.6" fill="none" stroke="#1a1a1a" stroke-width="1.1"/><rect x="0.6" y="4.2" width="6" height="4.5" fill="#1a1a1a"/><rect x="9" y="1" width="7" height="7.6" fill="#262626"/><rect x="10.3" y="3.2" width="4.4" height="4" fill="#555"/><rect x="18.7" y="2" width="5.4" height="0.9" fill="#333"/><rect x="20.5" y="1.2" width="1.8" height="0.9" fill="#333"/><path d="M19.2,3.3 L23.6,3.3 L23.1,8.6 L19.7,8.6 Z" fill="#6a6a6a"/></svg><div style="left:112.6px;top:630.11px;width:6px;height:6px;border:1px solid #bbb;background:linear-gradient(#fff,#e6e6e6)"></div><div class="t" style="left:167.5px;top:633.11px;font-size:6.5px;color:#333">2</div><div class="t" style="left:228.5px;top:633.11px;font-size:6.5px;color:#333">李四</div><div class="t" style="left:338.5px;top:633.11px;font-size:6.6px;color:#333">超级管理员</div><div class="t" style="left:489px;top:633.11px;font-size:6.6px;color:#333">至高无上的权利</div><svg style="position:absolute;left:722px;top:628.61px" width="26" height="9" viewBox="0 0 26 9"><path d="M2.2,4.2 L2.2,2.6 A2,2 0 0 1 6.2,2.6" fill="none" stroke="#1a1a1a" stroke-width="1.1"/><rect x="0.6" y="4.2" width="6" height="4.5" fill="#1a1a1a"/><rect x="9" y="1" width="7" height="7.6" fill="#262626"/><rect x="10.3" y="3.2" width="4.4" height="4" fill="#555"/><rect x="18.7" y="2" width="5.4" height="0.9" fill="#333"/><rect x="20.5" y="1.2" width="1.8" height="0.9" fill="#333"/><path d="M19.2,3.3 L23.6,3.3 L23.1,8.6 L19.7,8.6 Z" fill="#6a6a6a"/></svg><div style="left:112.6px;top:648.85px;width:6px;height:6px;border:1px solid #bbb;background:linear-gradient(#fff,#e6e6e6)"></div><div class="t" style="left:167.5px;top:651.85px;font-size:6.5px;color:#333">3</div><div class="t" style="left:228.5px;top:651.85px;font-size:6.5px;color:#333">王五</div><div class="t" style="left:338.5px;top:651.85px;font-size:6.6px;color:#333">管理员</div><div class="t" style="left:489px;top:651.85px;font-size:6.6px;color:#333">更改权利</div><svg style="position:absolute;left:722px;top:647.35px" width="26" height="9" viewBox="0 0 26 9"><path d="M2.2,4.2 L2.2,2.6 A2,2 0 0 1 6.2,2.6" fill="none" stroke="#1a1a1a" stroke-width="1.1"/><rect x="0.6" y="4.2" width="6" height="4.5" fill="#1a1a1a"/><rect x="9" y="1" width="7" height="7.6" fill="#262626"/><rect x="10.3" y="3.2" width="4.4" height="4" fill="#555"/><rect x="18.7" y="2" width="5.4" height="0.9" fill="#333"/><rect x="20.5" y="1.2" width="1.8" height="0.9" fill="#333"/><path d="M19.2,3.3 L23.6,3.3 L23.1,8.6 L19.7,8.6 Z" fill="#6a6a6a"/></svg><div style="left:112.6px;top:667.5899999999999px;width:6px;height:6px;border:1px solid #bbb;background:linear-gradient(#fff,#e6e6e6)"></div><div class="t" style="left:167.5px;top:670.5899999999999px;font-size:6.5px;color:#333">4</div><div class="t" style="left:228.5px;top:670.5899999999999px;font-size:6.5px;color:#333">赵六</div><div class="t" style="left:338.5px;top:670.5899999999999px;font-size:6.6px;color:#333">超级管理员</div><div class="t" style="left:489px;top:670.5899999999999px;font-size:6.6px;color:#333">至高无上的权利</div><svg style="position:absolute;left:722px;top:666.0899999999999px" width="26" height="9" viewBox="0 0 26 9"><path d="M2.2,4.2 L2.2,2.6 A2,2 0 0 1 6.2,2.6" fill="none" stroke="#1a1a1a" stroke-width="1.1"/><rect x="0.6" y="4.2" width="6" height="4.5" fill="#1a1a1a"/><rect x="9" y="1" width="7" height="7.6" fill="#262626"/><rect x="10.3" y="3.2" width="4.4" height="4" fill="#555"/><rect x="18.7" y="2" width="5.4" height="0.9" fill="#333"/><rect x="20.5" y="1.2" width="1.8" height="0.9" fill="#333"/><path d="M19.2,3.3 L23.6,3.3 L23.1,8.6 L19.7,8.6 Z" fill="#6a6a6a"/></svg><div style="left:112.6px;top:686.3299999999999px;width:6px;height:6px;border:1px solid #bbb;background:linear-gradient(#fff,#e6e6e6)"></div><div class="t" style="left:167.5px;top:689.3299999999999px;font-size:6.5px;color:#333">5</div><div class="t" style="left:228.5px;top:689.3299999999999px;font-size:6.5px;color:#333">宋加加</div><div class="t" style="left:338.5px;top:689.3299999999999px;font-size:6.6px;color:#333">超级管理员</div><div class="t" style="left:489px;top:689.3299999999999px;font-size:6.6px;color:#333">至高无上的权利</div><svg style="position:absolute;left:722px;top:684.8299999999999px" width="26" height="9" viewBox="0 0 26 9"><path d="M2.2,4.2 L2.2,2.6 A2,2 0 0 1 6.2,2.6" fill="none" stroke="#1a1a1a" stroke-width="1.1"/><rect x="0.6" y="4.2" width="6" height="4.5" fill="#1a1a1a"/><rect x="9" y="1" width="7" height="7.6" fill="#262626"/><rect x="10.3" y="3.2" width="4.4" height="4" fill="#555"/><rect x="18.7" y="2" width="5.4" height="0.9" fill="#333"/><rect x="20.5" y="1.2" width="1.8" height="0.9" fill="#333"/><path d="M19.2,3.3 L23.6,3.3 L23.1,8.6 L19.7,8.6 Z" fill="#6a6a6a"/></svg><div style="left:112.6px;top:705.0699999999999px;width:6px;height:6px;border:1px solid #bbb;background:linear-gradient(#fff,#e6e6e6)"></div><div class="t" style="left:167.5px;top:708.0699999999999px;font-size:6.5px;color:#333">6</div><div class="t" style="left:228.5px;top:708.0699999999999px;font-size:6.5px;color:#333">小青</div><div class="t" style="left:338.5px;top:708.0699999999999px;font-size:6.6px;color:#333">管理员</div><div class="t" style="left:489px;top:708.0699999999999px;font-size:6.6px;color:#333">更改权利</div><svg style="position:absolute;left:722px;top:703.5699999999999px" width="26" height="9" viewBox="0 0 26 9"><path d="M2.2,4.2 L2.2,2.6 A2,2 0 0 1 6.2,2.6" fill="none" stroke="#1a1a1a" stroke-width="1.1"/><rect x="0.6" y="4.2" width="6" height="4.5" fill="#1a1a1a"/><rect x="9" y="1" width="7" height="7.6" fill="#262626"/><rect x="10.3" y="3.2" width="4.4" height="4" fill="#555"/><rect x="18.7" y="2" width="5.4" height="0.9" fill="#333"/><rect x="20.5" y="1.2" width="1.8" height="0.9" fill="#333"/><path d="M19.2,3.3 L23.6,3.3 L23.1,8.6 L19.7,8.6 Z" fill="#6a6a6a"/></svg><div style="left:112.6px;top:723.81px;width:6px;height:6px;border:1px solid #bbb;background:linear-gradient(#fff,#e6e6e6)"></div><div class="t" style="left:167.5px;top:726.81px;font-size:6.5px;color:#333">7</div><div class="t" style="left:228.5px;top:726.81px;font-size:6.5px;color:#333">小强</div><div class="t" style="left:338.5px;top:726.81px;font-size:6.6px;color:#333">用户</div><div class="t" style="left:489px;top:726.81px;font-size:6.6px;color:#333">浏览权利</div><svg style="position:absolute;left:722px;top:722.31px" width="26" height="9" viewBox="0 0 26 9"><path d="M2.2,4.2 L2.2,2.6 A2,2 0 0 1 6.2,2.6" fill="none" stroke="#1a1a1a" stroke-width="1.1"/><rect x="0.6" y="4.2" width="6" height="4.5" fill="#1a1a1a"/><rect x="9" y="1" width="7" height="7.6" fill="#262626"/><rect x="10.3" y="3.2" width="4.4" height="4" fill="#555"/><rect x="18.7" y="2" width="5.4" height="0.9" fill="#333"/><rect x="20.5" y="1.2" width="1.8" height="0.9" fill="#333"/><path d="M19.2,3.3 L23.6,3.3 L23.1,8.6 L19.7,8.6 Z" fill="#6a6a6a"/></svg><div style="left:112.6px;top:742.55px;width:6px;height:6px;border:1px solid #bbb;background:linear-gradient(#fff,#e6e6e6)"></div><div class="t" style="left:167.5px;top:745.55px;font-size:6.5px;color:#333">8</div><div class="t" style="left:228.5px;top:745.55px;font-size:6.5px;color:#333">胖子</div><div class="t" style="left:338.5px;top:745.55px;font-size:6.6px;color:#333">超级管理员</div><div class="t" style="left:489px;top:745.55px;font-size:6.6px;color:#333">至高无上的权利</div><svg style="position:absolute;left:722px;top:741.05px" width="26" height="9" viewBox="0 0 26 9"><path d="M2.2,4.2 L2.2,2.6 A2,2 0 0 1 6.2,2.6" fill="none" stroke="#1a1a1a" stroke-width="1.1"/><rect x="0.6" y="4.2" width="6" height="4.5" fill="#1a1a1a"/><rect x="9" y="1" width="7" height="7.6" fill="#262626"/><rect x="10.3" y="3.2" width="4.4" height="4" fill="#555"/><rect x="18.7" y="2" width="5.4" height="0.9" fill="#333"/><rect x="20.5" y="1.2" width="1.8" height="0.9" fill="#333"/><path d="M19.2,3.3 L23.6,3.3 L23.1,8.6 L19.7,8.6 Z" fill="#6a6a6a"/></svg><div style="left:112.6px;top:761.29px;width:6px;height:6px;border:1px solid #bbb;background:linear-gradient(#fff,#e6e6e6)"></div><div class="t" style="left:167.5px;top:764.29px;font-size:6.5px;color:#333">9</div><div class="t" style="left:228.5px;top:764.29px;font-size:6.5px;color:#333">丽丽</div><div class="t" style="left:338.5px;top:764.29px;font-size:6.6px;color:#333">超级管理员</div><div class="t" style="left:489px;top:764.29px;font-size:6.6px;color:#333">至高无上的权利</div><svg style="position:absolute;left:722px;top:759.79px" width="26" height="9" viewBox="0 0 26 9"><path d="M2.2,4.2 L2.2,2.6 A2,2 0 0 1 6.2,2.6" fill="none" stroke="#1a1a1a" stroke-width="1.1"/><rect x="0.6" y="4.2" width="6" height="4.5" fill="#1a1a1a"/><rect x="9" y="1" width="7" height="7.6" fill="#262626"/><rect x="10.3" y="3.2" width="4.4" height="4" fill="#555"/><rect x="18.7" y="2" width="5.4" height="0.9" fill="#333"/><rect x="20.5" y="1.2" width="1.8" height="0.9" fill="#333"/><path d="M19.2,3.3 L23.6,3.3 L23.1,8.6 L19.7,8.6 Z" fill="#6a6a6a"/></svg><div style="left:112.6px;top:780.03px;width:6px;height:6px;border:1px solid #bbb;background:linear-gradient(#fff,#e6e6e6)"></div><div class="t" style="left:167.5px;top:783.03px;font-size:6.5px;color:#333">10</div><div class="t" style="left:228.5px;top:783.03px;font-size:6.5px;color:#333">name1</div><div class="t" style="left:338.5px;top:783.03px;font-size:6.6px;color:#333">超级管理员</div><div class="t" style="left:489px;top:783.03px;font-size:6.6px;color:#333">至高无上的权利</div><svg style="position:absolute;left:722px;top:778.53px" width="26" height="9" viewBox="0 0 26 9"><path d="M2.2,4.2 L2.2,2.6 A2,2 0 0 1 6.2,2.6" fill="none" stroke="#1a1a1a" stroke-width="1.1"/><rect x="0.6" y="4.2" width="6" height="4.5" fill="#1a1a1a"/><rect x="9" y="1" width="7" height="7.6" fill="#262626"/><rect x="10.3" y="3.2" width="4.4" height="4" fill="#555"/><rect x="18.7" y="2" width="5.4" height="0.9" fill="#333"/><rect x="20.5" y="1.2" width="1.8" height="0.9" fill="#333"/><path d="M19.2,3.3 L23.6,3.3 L23.1,8.6 L19.7,8.6 Z" fill="#6a6a6a"/></svg><div style="left:105px;top:802.4px;width:18.200000000000003px;height:14.400000000000034px;background:#009688"></div><div class="t" style="left:112.35px;top:809.6px;font-size:6.3px;color:#fff">1</div><div style="left:123.2px;top:802.4px;width:17.999999999999986px;height:14.400000000000034px;border:1px solid #e6e6e6;border-left:0;background:#fff"></div><div class="t" style="left:130.45px;top:809.6px;font-size:6.3px;color:#333">2</div><div style="left:141.2px;top:802.4px;width:18.400000000000006px;height:14.400000000000034px;border:1px solid #e6e6e6;border-left:0;background:#fff"></div><div class="t" style="left:148.64999999999998px;top:809.6px;font-size:6.3px;color:#333">3</div><div style="left:159.6px;top:802.4px;width:18.0px;height:14.400000000000034px;border:1px solid #e6e6e6;border-left:0;background:#fff"></div><div class="t" style="left:166.85px;top:809.6px;font-size:6.3px;color:#333">4</div><div style="left:177.6px;top:802.4px;width:18.200000000000017px;height:14.400000000000034px;border:1px solid #e6e6e6;border-left:0;background:#fff"></div><div class="t" style="left:184.95px;top:809.6px;font-size:6.3px;color:#333">5</div><div style="left:195.8px;top:802.4px;width:20.19999999999999px;height:14.400000000000034px;border:1px solid #e6e6e6;border-left:0;background:#fff"></div><div class="t" style="left:200.65px;top:809.6px;font-size:6.3px;color:#333">...</div><div style="left:216px;top:802.4px;width:24.599999999999994px;height:14.400000000000034px;border:1px solid #e6e6e6;border-left:0;background:#fff"></div><div class="t" style="left:223.05px;top:809.6px;font-size:6.3px;color:#333">100</div><div style="left:240.6px;top:802.4px;width:20.700000000000017px;height:14.400000000000034px;border:1px solid #e6e6e6;border-left:0;background:#fff"></div><div class="t" style="left:249.2px;top:809.6px;font-size:6.3px;color:#333">&gt;</div><svg style="position:absolute;left:95px;top:575px" width="9" height="28" viewBox="0 0 9 28"><path d="M0,0 L8.2,3.5 L8.2,24.5 L0,28 Z" fill="#efefef"/><path d="M2.8,13.5 L5.2,11.2 L5.2,15.8 Z" fill="#a0a0a0"/></svg><div style="left:798px;top:503px;width:1px;height:368px;background:#ebebeb"></div>
<div style="left:0px;top:871px;width:800px;height:436px;background:#fff"></div><div style="left:0;top:871px;width:290px;height:45px;"><div style="left:20px;top:5px;width:252px;height:36px;background:#fafafa;filter:blur(2px)"></div><div style="left:13px;top:41.5px;width:268px;height:1px;background:#e6efe6"></div><div style="left:0;top:0;width:290px;height:45px;filter:blur(1.6px)"><div style="left:24px;top:9px;width:24px;height:25px;border-radius:50%;background:radial-gradient(circle at 40% 45%,#e8f3f9 0,#d0e6f3 45%,#dcedf6 65%,rgba(255,255,255,0) 100%)"></div><div style="left:38px;top:7px;width:22px;height:29px;border-radius:50%;border-right:6px solid #f2ebc0"></div><div style="left:61.5px;top:10px;width:15px;height:15.5px;border-radius:45%;background:#e6d97a"></div><div style="left:81.2px;top:10px;width:15px;height:15.5px;border-radius:45%;background:#ede3a4"></div><div style="left:99.5px;top:10px;width:15px;height:15.5px;border-radius:45%;background:#eae09e"></div><div style="left:119.5px;top:10px;width:15px;height:15.5px;border-radius:45%;background:#e5d66c"></div><div style="left:60px;top:26px;width:75px;height:7px;background:#e9e4d0"></div></div><div style="left:0;top:0;width:290px;height:45px;filter:blur(2px)"><div style="left:140.5px;top:11.5px;width:11px;height:11.5px;border-radius:3px;background:#8f9de9"></div><div style="left:154.1px;top:11.5px;width:11px;height:11.5px;border-radius:3px;background:#8f9de9"></div><div style="left:167.7px;top:11.5px;width:11px;height:11.5px;border-radius:3px;background:#8f9de9"></div><div style="left:181.3px;top:11.5px;width:11px;height:11.5px;border-radius:3px;background:#8f9de9"></div><div style="left:194.9px;top:11.5px;width:11px;height:11.5px;border-radius:3px;background:#8f9de9"></div><div style="left:208.5px;top:11.5px;width:11px;height:11.5px;border-radius:3px;background:#8f9de9"></div><div style="left:222.1px;top:11.5px;width:11px;height:11.5px;border-radius:3px;background:#8f9de9"></div><div style="left:235.7px;top:11.5px;width:11px;height:11.5px;border-radius:3px;background:#8f9de9"></div><div style="left:140px;top:28.5px;width:30px;height:6px;background:#a8b2ee"></div><div style="left:177px;top:28.5px;width:26px;height:6px;background:#a8b2ee"></div><div style="left:209px;top:28.5px;width:25px;height:6px;background:#a8b2ee"></div><div style="left:240px;top:28.5px;width:27px;height:6px;background:#a8b2ee"></div></div></div><svg style="position:absolute;left:691px;top:886px" width="19" height="19" viewBox="0 0 19 19"><defs><clipPath id="av871"><circle cx="9.5" cy="9.5" r="9"/></clipPath></defs><circle cx="9.5" cy="9.5" r="9" fill="#b6e0b4"/><g clip-path="url(#av871)"><path d="M1,19 Q2,13.5 9.5,13 Q17,13.5 18,19 Z" fill="#f4f8fa"/><rect x="8.6" y="13" width="2" height="6" fill="#f0521e"/><ellipse cx="9.5" cy="9" rx="3.2" ry="3.8" fill="#f2dc5a"/><path d="M5.8,7.2 Q6,2.2 9.5,2.2 Q13,2.2 13.2,7.2 Q11.5,5.2 9.5,5.6 Q7.5,5.2 5.8,7.2 Z" fill="#1f3a44"/></g><circle cx="9.5" cy="9.5" r="9" fill="none" stroke="#9aa7b0" stroke-width="0.8"/></svg><div class="t" style="left:719.8px;top:895px;font-size:6.8px;color:#333">admin</div><div style="left:741px;top:893.5px;width:0;height:0;border-left:3px solid transparent;border-right:3px solid transparent;border-bottom:3px solid #aaa"></div><div class="t" style="left:756.5px;top:895px;font-size:6.8px;color:#aaa">前台首页</div><div style="left:0px;top:916px;width:800px;height:2px;background:#3db54a"></div><div style="left:0px;top:918px;width:95px;height:389px;background:#30323f"></div><div style="left:0px;top:919.5px;width:95px;height:20px;background:#262834"></div><div class="t" style="left:24px;top:929.5px;font-size:6.6px;color:#c6c7cc">数据管理</div><svg style="position:absolute;left:10.5px;top:926.2px" width="8" height="6.6" viewBox="0 0 8 6.6"><rect x="0.4" y="0.4" width="7.2" height="5.8" fill="#5a5c66" stroke="#c8c8c8" stroke-width="0.8"/><path d="M2.2,0.4 L2.2,6.2 M4,0.4 L4,6.2 M5.8,0.4 L5.8,6.2 M0.4,2.3 L7.6,2.3 M0.4,4.3 L7.6,4.3" stroke="#b8b8b8" stroke-width="0.6"/></svg><div style="left:85px;top:927.5px;width:0;height:0;border-left:3px solid transparent;border-right:3px solid transparent;border-bottom:3px solid #ccc"></div><div class="t" style="left:24px;top:950px;font-size:6.6px;color:#c6c7cc">预警信息管理</div><div class="t" style="left:24px;top:968.8px;font-size:6.6px;color:#c6c7cc">数据管理</div><div style="left:0px;top:977.7px;width:95px;height:19.5px;background:#009688"></div><div class="t" style="left:24px;top:987.5px;font-size:6.6px;color:#fff">数据统计</div><div class="t" style="left:28px;top:1008px;font-size:6.6px;color:#c6c7cc">用户管理</div><svg style="position:absolute;left:10px;top:1003px" width="13" height="9.5" viewBox="0 0 13 9.5"><g fill="#d4d4d4"><ellipse cx="4.6" cy="2.6" rx="1.7" ry="2.6"/><ellipse cx="8.4" cy="2.6" rx="1.7" ry="2.6"/><path d="M0,9.5 Q0.5,6.2 3.2,5.6 L6.5,5.4 L9.8,5.6 Q12.5,6.2 13,9.5 Z"/></g></svg><div class="t" style="left:24px;top:1029.5px;font-size:6.6px;color:#c6c7cc">角色管理</div><svg style="position:absolute;left:9.8px;top:1024.7px" width="9" height="9" viewBox="0 0 9 9"><g fill="#d4d4d4"><ellipse cx="4.5" cy="2.4" rx="1.8" ry="2.4"/><path d="M0,9 Q0.6,5.8 3.2,5.3 L5.8,5.3 Q8.4,5.8 9,9 Z"/></g></svg><div class="t" style="left:24px;top:1050.8px;font-size:6.6px;color:#c6c7cc">网站信息管理</div><svg style="position:absolute;left:10px;top:1046.8px" width="9" height="9" viewBox="0 0 9 9"><rect x="3" y="0.3" width="3" height="1.4" fill="none" stroke="#ddd" stroke-width="0.6"/><rect x="0.3" y="1.7" width="8.4" height="5" fill="#e6e6e6"/><rect x="1.3" y="2.7" width="6.4" height="3" fill="#9a9ca6"/><rect x="4" y="6.7" width="1" height="1.8" fill="#ddd"/></svg><div style="left:85px;top:1049.8px;width:0;height:0;border-left:3px solid transparent;border-right:3px solid transparent;border-top:3px solid #ccc"></div><div style="left:95px;top:918px;width:705px;height:20px;background:#f1f1f1"></div><div style="left:523.4px;top:918px;width:46.89999999999998px;height:16px;background:#fff"></div><div class="t" style="left:99.5px;top:925px;font-size:6.5px;color:#333">数据管理</div><div style="left:132.62px;top:924.7px;width:6.760000000000001px;height:0.6px;background:#cdcdcd;transform:rotate(45deg)"></div><div style="left:132.62px;top:924.7px;width:6.760000000000001px;height:0.6px;background:#cdcdcd;transform:rotate(-45deg)"></div><div class="t" style="left:151px;top:925px;font-size:6.5px;color:#333">首页</div><div style="left:168.62px;top:924.7px;width:6.760000000000001px;height:0.6px;background:#cdcdcd;transform:rotate(45deg)"></div><div style="left:168.62px;top:924.7px;width:6.760000000000001px;height:0.6px;background:#cdcdcd;transform:rotate(-45deg)"></div><div class="t" style="left:187px;top:925px;font-size:6.5px;color:#333">关于我们</div><div style="left:219.12px;top:924.7px;width:6.760000000000001px;height:0.6px;background:#cdcdcd;transform:rotate(45deg)"></div><div style="left:219.12px;top:924.7px;width:6.760000000000001px;height:0.6px;background:#cdcdcd;transform:rotate(-45deg)"></div><div class="t" style="left:234.5px;top:925px;font-size:6.5px;color:#333">心理新闻</div><div style="left:266.62px;top:924.7px;width:6.760000000000001px;height:0.6px;background:#cdcdcd;transform:rotate(45deg)"></div><div style="left:266.62px;top:924.7px;width:6.760000000000001px;height:0.6px;background:#cdcdcd;transform:rotate(-45deg)"></div><div class="t" style="left:280.6px;top:925px;font-size:6.5px;color:#333">资源下载</div><div style="left:312.62px;top:924.7px;width:6.760000000000001px;height:0.6px;background:#cdcdcd;transform:rotate(45deg)"></div><div style="left:312.62px;top:924.7px;width:6.760000000000001px;height:0.6px;background:#cdcdcd;transform:rotate(-45deg)"></div><div class="t" style="left:327.5px;top:925px;font-size:6.5px;color:#333">角色管理</div><div style="left:359.62px;top:924.7px;width:6.760000000000001px;height:0.6px;background:#cdcdcd;transform:rotate(45deg)"></div><div style="left:359.62px;top:924.7px;width:6.760000000000001px;height:0.6px;background:#cdcdcd;transform:rotate(-45deg)"></div><div class="t" style="left:374.4px;top:925px;font-size:6.5px;color:#333">用户管理</div><div style="left:405.02px;top:924.7px;width:6.760000000000001px;height:0.6px;background:#cdcdcd;transform:rotate(45deg)"></div><div style="left:405.02px;top:924.7px;width:6.760000000000001px;height:0.6px;background:#cdcdcd;transform:rotate(-45deg)"></div><div class="t" style="left:421px;top:925px;font-size:6.5px;color:#333">预警信息管理</div><div style="left:465.32px;top:924.7px;width:6.760000000000001px;height:0.6px;background:#cdcdcd;transform:rotate(45deg)"></div><div style="left:465.32px;top:924.7px;width:6.760000000000001px;height:0.6px;background:#cdcdcd;transform:rotate(-45deg)"></div><div class="t" style="left:481.2px;top:925px;font-size:6.5px;color:#333">数据管理</div><div style="left:512.22px;top:924.7px;width:6.760000000000001px;height:0.6px;background:#cdcdcd;transform:rotate(45deg)"></div><div style="left:512.22px;top:924.7px;width:6.760000000000001px;height:0.6px;background:#cdcdcd;transform:rotate(-45deg)"></div><div class="t" style="left:527.5px;top:925px;font-size:6.5px;color:#333">数据统计</div><div style="left:558.62px;top:924.7px;width:6.760000000000001px;height:0.6px;background:#cdcdcd;transform:rotate(45deg)"></div><div style="left:558.62px;top:924.7px;width:6.760000000000001px;height:0.6px;background:#cdcdcd;transform:rotate(-45deg)"></div><div style="left:323.7px;top:949.5px;width:190.3px;height:18.5px;border:1px solid #e6e6e6;background:#fff"></div><div class="t" style="left:328.7px;top:958.75px;font-size:8.6px;color:#999">搜索内容</div><div style="left:525px;top:951px;width:25px;height:11.5px;background:#009688"></div><div style="left:533.5px;top:952.75px;width:6px;height:6px;border:1.5px solid #fff;border-radius:50%"></div><div style="left:538.5px;top:958.25px;width:3px;height:1.6px;background:#fff;transform:rotate(45deg)"></div><div style="left:105px;top:976px;width:677.5px;height:16.5px;background:#f3f3f3"></div><div style="left:107px;top:978.7px;width:58.5px;height:12.0px;background:#ff5722;display:flex;align-items:center;justify-content:center;white-space:nowrap;font-size:8.9px;line-height:1;color:#fff"><svg style="display:inline-block;vertical-align:middle;margin-right:1px;position:relative;top:-0.5px" width="7" height="7" viewBox="0 0 7 7"><rect x="0.5" y="0.5" width="6" height="6" fill="#fff"/><path d="M1.5,2.2 L5.5,2.2 M1.5,3.5 L5.5,3.5 M1.5,4.8 L5.5,4.8" stroke="#ff5722" stroke-width="0.6"/></svg>详细信息</div><div style="left:173px;top:978.7px;width:41px;height:12.0px;background:#ff5722;display:flex;align-items:center;justify-content:center;white-space:nowrap;font-size:8.9px;line-height:1;color:#fff"><svg style="display:inline-block;vertical-align:middle;margin-right:1px;position:relative;top:-0.5px" width="7" height="7" viewBox="0 0 7 7"><path d="M0.8,0.5 L0.8,6.2 L6.5,6.2" fill="none" stroke="#fff" stroke-width="0.8"/><path d="M1.5,5 L3,3 L4.2,4 L6,1.5" fill="none" stroke="#fff" stroke-width="0.8"/></svg>统计</div><div style="left:221.7px;top:978.7px;width:58.30000000000001px;height:12.0px;background:#ff5722;display:flex;align-items:center;justify-content:center;white-space:nowrap;font-size:8.9px;line-height:1;color:#fff"><svg style="display:inline-block;vertical-align:middle;margin-right:1px;position:relative;top:-0.5px" width="7" height="7" viewBox="0 0 7 7"><path d="M3.5,0.8 L3.5,4.6 M2,2.3 L3.5,0.8 L5,2.3" fill="none" stroke="#fff" stroke-width="0.8"/><path d="M0.8,4 L0.8,6.2 L6.2,6.2 L6.2,4" fill="none" stroke="#fff" stroke-width="0.8"/></svg>批量导出</div><div style="left:287px;top:978.7px;width:41.60000000000002px;height:12.0px;background:#ff5722;display:flex;align-items:center;justify-content:center;white-space:nowrap;font-size:8.9px;line-height:1;color:#fff"><svg style="display:inline-block;vertical-align:middle;margin-right:1px;position:relative;top:-0.5px" width="8" height="7" viewBox="0 0 8 7"><path d="M2,6 Q0.3,6 0.5,4.3 Q0.8,2.8 2.2,3 Q2.6,0.8 4.5,1 Q6.6,1.2 6.6,3.2 Q7.6,3.6 7.4,4.8 Q7.2,6 6,6 Z" fill="none" stroke="#fff" stroke-width="0.7"/><path d="M4,5.5 L4,3 M3,4 L4,3 L5,4" fill="none" stroke="#fff" stroke-width="0.6"/></svg>导出</div><div class="t" style="right:19px;top:988.5px;font-size:8.6px;color:#222">共有数据：88 条</div><div style="left:105px;top:997.8px;width:676.5px;height:18.4px;background:#2aa6ea"></div><div style="left:105px;top:1016.2px;width:676.5px;height:18.900000000000006px;background:#d6eef9"></div><div style="left:105px;top:1035.1px;width:676.5px;height:18.900000000000006px;background:#d6eef9"></div><div style="left:105px;top:1054px;width:676.5px;height:19px;background:#d6eef9"></div><div style="left:105px;top:1073px;width:676.5px;height:19px;background:#d6eef9"></div><div style="left:105px;top:1092px;width:676.5px;height:18.5px;background:#d6eef9"></div><div style="left:105px;top:1015.7px;width:676.5px;height:1px;background:#bcd8ee"></div><div style="left:105px;top:1034.6px;width:676.5px;height:1px;background:#bcd8ee"></div><div style="left:105px;top:1053.5px;width:676.5px;height:1px;background:#bcd8ee"></div><div style="left:105px;top:1072.5px;width:676.5px;height:1px;background:#bcd8ee"></div><div style="left:105px;top:1091.5px;width:676.5px;height:1px;background:#bcd8ee"></div><div style="left:105px;top:1110.0px;width:676.5px;height:1px;background:#bcd8ee"></div><div style="left:104.5px;top:1016.2px;width:1px;height:94.30000000000001px;background:#bcd8ee"></div><div style="left:138.0px;top:1016.2px;width:1px;height:94.30000000000001px;background:#bcd8ee"></div><div style="left:192.0px;top:1016.2px;width:1px;height:94.30000000000001px;background:#bcd8ee"></div><div style="left:257.0px;top:1016.2px;width:1px;height:94.30000000000001px;background:#bcd8ee"></div><div style="left:302.0px;top:1016.2px;width:1px;height:94.30000000000001px;background:#bcd8ee"></div><div style="left:346.0px;top:1016.2px;width:1px;height:94.30000000000001px;background:#bcd8ee"></div><div style="left:411.0px;top:1016.2px;width:1px;height:94.30000000000001px;background:#bcd8ee"></div><div style="left:502.0px;top:1016.2px;width:1px;height:94.30000000000001px;background:#bcd8ee"></div><div style="left:567.0px;top:1016.2px;width:1px;height:94.30000000000001px;background:#bcd8ee"></div><div style="left:732.0px;top:1016.2px;width:1px;height:94.30000000000001px;background:#bcd8ee"></div><div style="left:781.0px;top:1016.2px;width:1px;height:94.30000000000001px;background:#bcd8ee"></div><div style="left:138.0px;top:997.8px;width:0px;height:18.4px;border-left:1px dotted rgba(255,255,255,0.45)"></div><div style="left:192.0px;top:997.8px;width:0px;height:18.4px;border-left:1px dotted rgba(255,255,255,0.45)"></div><div style="left:257.0px;top:997.8px;width:0px;height:18.4px;border-left:1px dotted rgba(255,255,255,0.45)"></div><div style="left:302.0px;top:997.8px;width:0px;height:18.4px;border-left:1px dotted rgba(255,255,255,0.45)"></div><div style="left:346.0px;top:997.8px;width:0px;height:18.4px;border-left:1px dotted rgba(255,255,255,0.45)"></div><div style="left:411.0px;top:997.8px;width:0px;height:18.4px;border-left:1px dotted rgba(255,255,255,0.45)"></div><div style="left:502.0px;top:997.8px;width:0px;height:18.4px;border-left:1px dotted rgba(255,255,255,0.45)"></div><div style="left:567.0px;top:997.8px;width:0px;height:18.4px;border-left:1px dotted rgba(255,255,255,0.45)"></div><div style="left:732.0px;top:997.8px;width:0px;height:18.4px;border-left:1px dotted rgba(255,255,255,0.45)"></div><div style="left:104.5px;top:997.8px;width:1px;height:112.7px;background:#bcd8ee"></div><div style="left:781.0px;top:997.8px;width:1px;height:112.7px;background:#bcd8ee"></div><div class="t" style="left:146.0px;top:1007px;font-size:6.5px;color:#111;font-weight:bold">用户名</div><div class="t" style="left:200.0px;top:1007px;font-size:6.5px;color:#111;font-weight:bold">唯一标识</div><div class="t" style="left:265.0px;top:1007px;font-size:6.5px;color:#111;font-weight:bold">年龄</div><div class="t" style="left:310.0px;top:1007px;font-size:6.5px;color:#111;font-weight:bold">性别</div><div class="t" style="left:354.0px;top:1007px;font-size:6.5px;color:#111;font-weight:bold">所属</div><div class="t" style="left:419.0px;top:1007px;font-size:6.5px;color:#111;font-weight:bold">测试用时</div><div class="t" style="left:510.0px;top:1007px;font-size:6.5px;color:#111;font-weight:bold">预警等级</div><div class="t" style="left:575.0px;top:1007px;font-size:6.5px;color:#111;font-weight:bold">测试时间</div><div class="t" style="left:740.0px;top:1007px;font-size:6.5px;color:#111;font-weight:bold">操作</div><div style="left:112px;top:1004.0px;width:6px;height:6px;border:1px solid #bbb;background:linear-gradient(#fff,#e6e6e6)"></div><div style="left:112px;top:1022.6500000000001px;width:6px;height:6px;border:1px solid #bbb;background:linear-gradient(#fff,#e6e6e6)"></div><div class="t" style="left:146.0px;top:1025.65px;font-size:6.9px;color:#333">宋加加</div><div class="t" style="left:200.0px;top:1025.65px;font-size:6.9px;color:#333;text-decoration:underline">a</div><div class="t" style="left:265.0px;top:1025.65px;font-size:6.9px;color:#333">24</div><div class="t" style="left:310.0px;top:1025.65px;font-size:6.9px;color:#333">男</div><div class="t" style="left:354.0px;top:1025.65px;font-size:6.9px;color:#333">阳光心健</div><div class="t" style="left:419.0px;top:1025.65px;font-size:6.9px;color:#333">00时00分50秒</div><div class="t" style="left:510.0px;top:1025.65px;font-size:6.9px;color:#333">等级一</div><div class="t" style="left:575.0px;top:1025.65px;font-size:6.9px;color:#333">2017年7月09日16时00分00秒</div><svg style="position:absolute;left:739px;top:1021.1500000000001px" width="18" height="9" viewBox="0 0 18 9"><rect x="0.2" y="0.6" width="7.6" height="7.6" fill="#f6a474"/><rect x="1.4" y="2.2" width="5.2" height="4.8" fill="#fde6d8"/><path d="M2.4,4.6 L3.6,5.8 L5.8,3.2" fill="none" stroke="#f08a5a" stroke-width="0.8"/><rect x="10.7" y="1.5" width="5.4" height="1.3" fill="#222"/><path d="M11.1,3 L15.7,3 L15.3,7.6 L11.5,7.6 Z" fill="#6a7a80"/></svg><div style="left:112px;top:1041.55px;width:6px;height:6px;border:1px solid #bbb;background:linear-gradient(#fff,#e6e6e6)"></div><div class="t" style="left:146.0px;top:1044.55px;font-size:6.9px;color:#333">张三</div><div class="t" style="left:200.0px;top:1044.55px;font-size:6.9px;color:#333;text-decoration:underline">b</div><div class="t" style="left:265.0px;top:1044.55px;font-size:6.9px;color:#333">20</div><div class="t" style="left:310.0px;top:1044.55px;font-size:6.9px;color:#333">男</div><div class="t" style="left:354.0px;top:1044.55px;font-size:6.9px;color:#333">阳光心健</div><div class="t" style="left:419.0px;top:1044.55px;font-size:6.9px;color:#333">00时10分10秒</div><div class="t" style="left:510.0px;top:1044.55px;font-size:6.9px;color:#333">等级二</div><div class="t" style="left:575.0px;top:1044.55px;font-size:6.9px;color:#333">2017年7月09日19时09分01秒</div><svg style="position:absolute;left:739px;top:1040.05px" width="18" height="9" viewBox="0 0 18 9"><rect x="0.2" y="0.6" width="7.6" height="7.6" fill="#f6a474"/><rect x="1.4" y="2.2" width="5.2" height="4.8" fill="#fde6d8"/><path d="M2.4,4.6 L3.6,5.8 L5.8,3.2" fill="none" stroke="#f08a5a" stroke-width="0.8"/><rect x="10.7" y="1.5" width="5.4" height="1.3" fill="#222"/><path d="M11.1,3 L15.7,3 L15.3,7.6 L11.5,7.6 Z" fill="#6a7a80"/></svg><div style="left:112px;top:1060.5px;width:6px;height:6px;border:1px solid #bbb;background:linear-gradient(#fff,#e6e6e6)"></div><div class="t" style="left:146.0px;top:1063.5px;font-size:6.9px;color:#333">李四</div><div class="t" style="left:200.0px;top:1063.5px;font-size:6.9px;color:#333;text-decoration:underline">c</div><div class="t" style="left:265.0px;top:1063.5px;font-size:6.9px;color:#333">40</div><div class="t" style="left:310.0px;top:1063.5px;font-size:6.9px;color:#333">男</div><div class="t" style="left:354.0px;top:1063.5px;font-size:6.9px;color:#333">阳光心健</div><div class="t" style="left:419.0px;top:1063.5px;font-size:6.9px;color:#333">00时39分29秒</div><div class="t" style="left:510.0px;top:1063.5px;font-size:6.9px;color:#333">等级三</div><div class="t" style="left:575.0px;top:1063.5px;font-size:6.9px;color:#333">2017年7月11日11时54分34秒</div><svg style="position:absolute;left:739px;top:1059.0px" width="18" height="9" viewBox="0 0 18 9"><rect x="0.2" y="0.6" width="7.6" height="7.6" fill="#f6a474"/><rect x="1.4" y="2.2" width="5.2" height="4.8" fill="#fde6d8"/><path d="M2.4,4.6 L3.6,5.8 L5.8,3.2" fill="none" stroke="#f08a5a" stroke-width="0.8"/><rect x="10.7" y="1.5" width="5.4" height="1.3" fill="#222"/><path d="M11.1,3 L15.7,3 L15.3,7.6 L11.5,7.6 Z" fill="#6a7a80"/></svg><div style="left:112px;top:1079.5px;width:6px;height:6px;border:1px solid #bbb;background:linear-gradient(#fff,#e6e6e6)"></div><div class="t" style="left:146.0px;top:1082.5px;font-size:6.9px;color:#333">丽丽</div><div class="t" style="left:200.0px;top:1082.5px;font-size:6.9px;color:#333;text-decoration:underline">d</div><div class="t" style="left:265.0px;top:1082.5px;font-size:6.9px;color:#333">20</div><div class="t" style="left:310.0px;top:1082.5px;font-size:6.9px;color:#333">女</div><div class="t" style="left:354.0px;top:1082.5px;font-size:6.9px;color:#333">阳光心健</div><div class="t" style="left:419.0px;top:1082.5px;font-size:6.9px;color:#333">01时00分09秒</div><div class="t" style="left:510.0px;top:1082.5px;font-size:6.9px;color:#333">等级四</div><div class="t" style="left:575.0px;top:1082.5px;font-size:6.9px;color:#333">2017年7月18日15时50分05秒</div><svg style="position:absolute;left:739px;top:1078.0px" width="18" height="9" viewBox="0 0 18 9"><rect x="0.2" y="0.6" width="7.6" height="7.6" fill="#f6a474"/><rect x="1.4" y="2.2" width="5.2" height="4.8" fill="#fde6d8"/><path d="M2.4,4.6 L3.6,5.8 L5.8,3.2" fill="none" stroke="#f08a5a" stroke-width="0.8"/><rect x="10.7" y="1.5" width="5.4" height="1.3" fill="#222"/><path d="M11.1,3 L15.7,3 L15.3,7.6 L11.5,7.6 Z" fill="#6a7a80"/></svg><div style="left:112px;top:1098.25px;width:6px;height:6px;border:1px solid #bbb;background:linear-gradient(#fff,#e6e6e6)"></div><div class="t" style="left:146.0px;top:1101.25px;font-size:6.9px;color:#333">王五</div><div class="t" style="left:200.0px;top:1101.25px;font-size:6.9px;color:#333;text-decoration:underline">c</div><div class="t" style="left:265.0px;top:1101.25px;font-size:6.9px;color:#333">45</div><div class="t" style="left:310.0px;top:1101.25px;font-size:6.9px;color:#333">男</div><div class="t" style="left:354.0px;top:1101.25px;font-size:6.9px;color:#333">阳光心健</div><div class="t" style="left:419.0px;top:1101.25px;font-size:6.9px;color:#333">00时45分45秒</div><div class="t" style="left:510.0px;top:1101.25px;font-size:6.9px;color:#333">等级四</div><div class="t" style="left:575.0px;top:1101.25px;font-size:6.9px;color:#333">2017年7月18日17时03分56秒</div><svg style="position:absolute;left:739px;top:1096.75px" width="18" height="9" viewBox="0 0 18 9"><rect x="0.2" y="0.6" width="7.6" height="7.6" fill="#f6a474"/><rect x="1.4" y="2.2" width="5.2" height="4.8" fill="#fde6d8"/><path d="M2.4,4.6 L3.6,5.8 L5.8,3.2" fill="none" stroke="#f08a5a" stroke-width="0.8"/><rect x="10.7" y="1.5" width="5.4" height="1.3" fill="#222"/><path d="M11.1,3 L15.7,3 L15.3,7.6 L11.5,7.6 Z" fill="#6a7a80"/></svg><div style="left:105px;top:1121px;width:18.200000000000003px;height:14px;background:#009688"></div><div class="t" style="left:112.35px;top:1128.0px;font-size:6.3px;color:#fff">1</div><div style="left:123.2px;top:1121px;width:17.999999999999986px;height:14px;border:1px solid #e6e6e6;border-left:0;background:#fff"></div><div class="t" style="left:130.45px;top:1128.0px;font-size:6.3px;color:#333">2</div><div style="left:141.2px;top:1121px;width:18.400000000000006px;height:14px;border:1px solid #e6e6e6;border-left:0;background:#fff"></div><div class="t" style="left:148.64999999999998px;top:1128.0px;font-size:6.3px;color:#333">3</div><div style="left:159.6px;top:1121px;width:18.0px;height:14px;border:1px solid #e6e6e6;border-left:0;background:#fff"></div><div class="t" style="left:166.85px;top:1128.0px;font-size:6.3px;color:#333">4</div><div style="left:177.6px;top:1121px;width:18.200000000000017px;height:14px;border:1px solid #e6e6e6;border-left:0;background:#fff"></div><div class="t" style="left:184.95px;top:1128.0px;font-size:6.3px;color:#333">5</div><div style="left:195.8px;top:1121px;width:20.19999999999999px;height:14px;border:1px solid #e6e6e6;border-left:0;background:#fff"></div><div class="t" style="left:200.65px;top:1128.0px;font-size:6.3px;color:#333">...</div><div style="left:216px;top:1121px;width:24.599999999999994px;height:14px;border:1px solid #e6e6e6;border-left:0;background:#fff"></div><div class="t" style="left:223.05px;top:1128.0px;font-size:6.3px;color:#333">100</div><div style="left:240.6px;top:1121px;width:20.700000000000017px;height:14px;border:1px solid #e6e6e6;border-left:0;background:#fff"></div><div class="t" style="left:249.2px;top:1128.0px;font-size:6.3px;color:#333">&gt;</div><svg style="position:absolute;left:95px;top:1011.2px" width="9" height="28" viewBox="0 0 9 28"><path d="M0,0 L8.2,3.5 L8.2,24.5 L0,28 Z" fill="#efefef"/><path d="M2.8,13.5 L5.2,11.2 L5.2,15.8 Z" fill="#a0a0a0"/></svg><div style="left:798px;top:938px;width:1px;height:369px;background:#ebebeb"></div><div class="t" style="left:400.3px;top:1157px;font-size:8.4px;color:#333">症状图表显示<span style="display:inline-block;width:8.4px;text-align:center">(</span>标题<span style="display:inline-block;width:8.4px;text-align:center">)</span></div><div class="t" style="left:179.5px;top:1182px;font-size:5.8px;color:#222;font-weight:bold">症状比例</div><div class="t" style="left:527px;top:1182.5px;font-size:5.8px;color:#222;font-weight:bold">症状性别比例</div><svg style="position:absolute;left:0;top:871px" width="800" height="436"><path d="M235.5,374 L235.50,323.00 A51,51 0 0 1 273.33,408.20 Z" fill="#3366cc" stroke="#fff" stroke-width="0.6"/><path d="M235.5,374 L273.33,408.20 A51,51 0 0 1 213.50,420.01 Z" fill="#dc3912" stroke="#fff" stroke-width="0.6"/><path d="M235.5,374 L213.50,420.01 A51,51 0 0 1 190.35,397.72 Z" fill="#ff9900" stroke="#fff" stroke-width="0.6"/><path d="M235.5,374 L190.35,397.72 A51,51 0 0 1 186.53,359.77 Z" fill="#109618" stroke="#fff" stroke-width="0.6"/><path d="M235.5,374 L186.53,359.77 A51,51 0 0 1 199.89,337.49 Z" fill="#990099" stroke="#fff" stroke-width="0.6"/><path d="M235.5,374 L199.89,337.49 A51,51 0 0 1 235.50,323.00 Z" fill="#0099c6" stroke="#fff" stroke-width="0.6"/><path d="M583,374.5 L583.00,323.50 A51,51 0 0 1 598.76,423.00 Z" fill="#3366cc" stroke="#fff" stroke-width="0.6"/><path d="M583,374.5 L598.76,423.00 A51,51 0 1 1 583.00,323.50 Z" fill="#dc3912" stroke="#fff" stroke-width="0.6"/></svg><div class="t" style="left:260.2px;top:1230.5px;font-size:6.2px;color:#fff">36.7%</div><div class="t" style="left:234.0px;top:1285.5px;font-size:6.2px;color:#fff">20.4%</div><div class="t" style="left:200.2px;top:1272.5px;font-size:6.2px;color:#fff">10.2%</div><div class="t" style="left:187.5px;top:1249.5px;font-size:6.2px;color:#fff">12.2%</div><div class="t" style="left:190.7px;top:1225.5px;font-size:6.2px;color:#fff">8.2%</div><div class="t" style="left:211.5px;top:1208.7px;font-size:6.2px;color:#fff">12.2%</div><div class="t" style="left:616.9px;top:1239px;font-size:6.2px;color:#fff">45%</div><div class="t" style="left:538.4px;top:1251px;font-size:6.2px;color:#fff">55%</div><div style="left:300px;top:1193.5px;width:5px;height:5px;background:#3366cc"></div><div class="t" style="left:308px;top:1196.0px;font-size:5.6px;color:#222">焦虑型人格障碍</div><div style="left:300px;top:1203.0px;width:5px;height:5px;background:#dc3912"></div><div class="t" style="left:308px;top:1205.5px;font-size:5.6px;color:#222">分裂样人格障碍</div><div style="left:300px;top:1212.5px;width:5px;height:5px;background:#ff9900"></div><div class="t" style="left:308px;top:1215.0px;font-size:5.6px;color:#222">强迫型人格障碍</div><div style="left:300px;top:1222.0px;width:5px;height:5px;background:#109618"></div><div class="t" style="left:308px;top:1224.5px;font-size:5.6px;color:#222">偏执型人格障碍</div><div style="left:300px;top:1231.5px;width:5px;height:5px;background:#990099"></div><div class="t" style="left:308px;top:1234.0px;font-size:5.6px;color:#222">表演型人格障碍</div><div style="left:300px;top:1241.0px;width:5px;height:5px;background:#0099c6"></div><div class="t" style="left:308px;top:1243.5px;font-size:5.6px;color:#222">冲动控制性人格障碍</div><div style="left:648px;top:1194.2px;width:5px;height:5px;background:#3366cc"></div><div class="t" style="left:656px;top:1196.7px;font-size:5.6px;color:#222">男</div><div style="left:648px;top:1203.5px;width:5px;height:5px;background:#dc3912"></div><div class="t" style="left:656px;top:1206.0px;font-size:5.6px;color:#222">女</div><div style="left:710px;top:906.5px;width:36px;height:1.5px;background:#e8512a"></div><div style="left:710px;top:908px;width:46.5px;height:63.5px;background:#fff;border:1px solid #e4e4e4;box-shadow:0 1px 3px rgba(0,0,0,0.12)"></div><div class="t" style="left:720.5px;top:921px;font-size:6.8px;color:#333">个人信息</div><div class="t" style="left:720.5px;top:941px;font-size:6.8px;color:#333">切换帐号</div><div class="t" style="left:720.5px;top:960px;font-size:6.8px;color:#333">退出</div>
<div style="left:0px;top:1307px;width:800px;height:282px;background:#fff"></div><div style="left:0px;top:1307px;width:1px;height:282px;background:#d9e8f5"></div><svg style="position:absolute;left:18.5px;top:1315.0px" width="16" height="22" viewBox="0 0 16 22"><path d="M0.5,2 L5,0.5 L14.5,5 L14.5,21 L5,21 L0.5,19 Z" fill="#f3e7a8"/><path d="M0.5,2 L5,0.5 L5,21 L0.5,19 Z" fill="#e3cd6a"/><path d="M6,4 L13.5,6.5 L13.5,20 L6,20 Z" fill="#fdfdfd" stroke="#d6d6d6" stroke-width="0.6"/><path d="M8,5 L8,20" stroke="#cfcfcf" stroke-width="0.8"/></svg><div class="t" style="left:41px;top:1326.3px;font-size:10.5px;color:#111">css</div><svg style="position:absolute;left:210.5px;top:1315.0px" width="16" height="22" viewBox="0 0 16 22"><path d="M0.5,2 L5,0.5 L14.5,5 L14.5,21 L5,21 L0.5,19 Z" fill="#f3e7a8"/><path d="M0.5,2 L5,0.5 L5,21 L0.5,19 Z" fill="#e3cd6a"/><path d="M6,4 L13.5,6.5 L13.5,20 L6,20 Z" fill="#fdfdfd" stroke="#d6d6d6" stroke-width="0.6"/><path d="M8,5 L8,20" stroke="#cfcfcf" stroke-width="0.8"/><rect x="8.6" y="5.5" width="4.4" height="13.5" fill="#1a1a1a"/><path d="M9.4,8 L12,8 M9.4,11 L12,11 M9.4,14 L12,14 M9.4,17 L12,17" stroke="#ddd" stroke-width="0.8"/></svg><div class="t" style="left:233px;top:1326.3px;font-size:10.5px;color:#111">images</div><svg style="position:absolute;left:402.5px;top:1315.0px" width="16" height="22" viewBox="0 0 16 22"><path d="M0.5,2 L5,0.5 L14.5,5 L14.5,21 L5,21 L0.5,19 Z" fill="#f3e7a8"/><path d="M0.5,2 L5,0.5 L5,21 L0.5,19 Z" fill="#e3cd6a"/><path d="M6,4 L13.5,6.5 L13.5,20 L6,20 Z" fill="#fdfdfd" stroke="#d6d6d6" stroke-width="0.6"/><path d="M8,5 L8,20" stroke="#cfcfcf" stroke-width="0.8"/></svg><div class="t" style="left:425px;top:1326.3px;font-size:10.5px;color:#111">js</div><svg style="position:absolute;left:594.5px;top:1315.0px" width="16" height="22" viewBox="0 0 16 22"><path d="M0.5,2 L5,0.5 L14.5,5 L14.5,21 L5,21 L0.5,19 Z" fill="#f3e7a8"/><path d="M0.5,2 L5,0.5 L5,21 L0.5,19 Z" fill="#e3cd6a"/><path d="M6,4 L13.5,6.5 L13.5,20 L6,20 Z" fill="#fdfdfd" stroke="#d6d6d6" stroke-width="0.6"/><path d="M8,5 L8,20" stroke="#cfcfcf" stroke-width="0.8"/><rect x="6.5" y="5" width="7" height="15" fill="#e9dcae"/><path d="M8,6 L8,19 M10.5,6 L10.5,19 M12.5,6 L12.5,19" stroke="#d89a50" stroke-width="0.9"/><path d="M9.2,6 L9.2,19" stroke="#8aa0b8" stroke-width="0.8"/></svg><div class="t" style="left:617px;top:1326.3px;font-size:10.5px;color:#111">lib</div><svg style="position:absolute;left:19px;top:1343.55px" width="17" height="21" viewBox="0 0 17 21"><path d="M0.6,0.6 L11.5,0.6 L16.4,5.5 L16.4,20.4 L0.6,20.4 Z" fill="#fff" stroke="#c9c9c9" stroke-width="1"/><path d="M11.5,0.6 L11.5,5.5 L16.4,5.5" fill="#f4f4f4" stroke="#c9c9c9" stroke-width="0.8"/></svg><div class="t" style="left:41px;top:1352.85px;font-size:10.5px;color:#111">About_us.html</div><svg style="position:absolute;left:211px;top:1343.55px" width="17" height="21" viewBox="0 0 17 21"><path d="M0.6,0.6 L11.5,0.6 L16.4,5.5 L16.4,20.4 L0.6,20.4 Z" fill="#fff" stroke="#c9c9c9" stroke-width="1"/><path d="M11.5,0.6 L11.5,5.5 L16.4,5.5" fill="#f4f4f4" stroke="#c9c9c9" stroke-width="0.8"/></svg><div class="t" style="left:233px;top:1352.85px;font-size:10.5px;color:#111">about_us_add.html</div><svg style="position:absolute;left:403px;top:1343.55px" width="17" height="21" viewBox="0 0 17 21"><path d="M0.6,0.6 L11.5,0.6 L16.4,5.5 L16.4,20.4 L0.6,20.4 Z" fill="#fff" stroke="#c9c9c9" stroke-width="1"/><path d="M11.5,0.6 L11.5,5.5 L16.4,5.5" fill="#f4f4f4" stroke="#c9c9c9" stroke-width="0.8"/></svg><div class="t" style="left:425px;top:1352.85px;font-size:10.5px;color:#111">about_us_edit.html</div><svg style="position:absolute;left:595px;top:1343.55px" width="17" height="21" viewBox="0 0 17 21"><path d="M0.6,0.6 L11.5,0.6 L16.4,5.5 L16.4,20.4 L0.6,20.4 Z" fill="#fff" stroke="#c9c9c9" stroke-width="1"/><path d="M11.5,0.6 L11.5,5.5 L16.4,5.5" fill="#f4f4f4" stroke="#c9c9c9" stroke-width="0.8"/></svg><div class="t" style="left:617px;top:1352.85px;font-size:10.5px;color:#111">Data_management.html</div><svg style="position:absolute;left:19px;top:1370.1px" width="17" height="21" viewBox="0 0 17 21"><path d="M0.6,0.6 L11.5,0.6 L16.4,5.5 L16.4,20.4 L0.6,20.4 Z" fill="#fff" stroke="#c9c9c9" stroke-width="1"/><path d="M11.5,0.6 L11.5,5.5 L16.4,5.5" fill="#f4f4f4" stroke="#c9c9c9" stroke-width="0.8"/></svg><div class="t" style="left:41px;top:1379.3999999999999px;font-size:10.5px;color:#111">data_management_look.html</div><svg style="position:absolute;left:211px;top:1370.1px" width="17" height="21" viewBox="0 0 17 21"><path d="M0.6,0.6 L11.5,0.6 L16.4,5.5 L16.4,20.4 L0.6,20.4 Z" fill="#fff" stroke="#c9c9c9" stroke-width="1"/><path d="M11.5,0.6 L11.5,5.5 L16.4,5.5" fill="#f4f4f4" stroke="#c9c9c9" stroke-width="0.8"/></svg><div class="t" style="left:233px;top:1379.3999999999999px;font-size:10.5px;color:#111">Download.html</div><svg style="position:absolute;left:403px;top:1370.1px" width="17" height="21" viewBox="0 0 17 21"><path d="M0.6,0.6 L11.5,0.6 L16.4,5.5 L16.4,20.4 L0.6,20.4 Z" fill="#fff" stroke="#c9c9c9" stroke-width="1"/><path d="M11.5,0.6 L11.5,5.5 L16.4,5.5" fill="#f4f4f4" stroke="#c9c9c9" stroke-width="0.8"/></svg><div class="t" style="left:425px;top:1379.3999999999999px;font-size:10.5px;color:#111">download_bookadd.html</div><svg style="position:absolute;left:595px;top:1370.1px" width="17" height="21" viewBox="0 0 17 21"><path d="M0.6,0.6 L11.5,0.6 L16.4,5.5 L16.4,20.4 L0.6,20.4 Z" fill="#fff" stroke="#c9c9c9" stroke-width="1"/><path d="M11.5,0.6 L11.5,5.5 L16.4,5.5" fill="#f4f4f4" stroke="#c9c9c9" stroke-width="0.8"/></svg><div class="t" style="left:617px;top:1379.3999999999999px;font-size:10.5px;color:#111">download_bookedit.html</div><svg style="position:absolute;left:19px;top:1396.65px" width="17" height="21" viewBox="0 0 17 21"><path d="M0.6,0.6 L11.5,0.6 L16.4,5.5 L16.4,20.4 L0.6,20.4 Z" fill="#fff" stroke="#c9c9c9" stroke-width="1"/><path d="M11.5,0.6 L11.5,5.5 L16.4,5.5" fill="#f4f4f4" stroke="#c9c9c9" stroke-width="0.8"/></svg><div class="t" style="left:41px;top:1405.95px;font-size:10.5px;color:#111">download_picadd.html</div><svg style="position:absolute;left:211px;top:1396.65px" width="17" height="21" viewBox="0 0 17 21"><path d="M0.6,0.6 L11.5,0.6 L16.4,5.5 L16.4,20.4 L0.6,20.4 Z" fill="#fff" stroke="#c9c9c9" stroke-width="1"/><path d="M11.5,0.6 L11.5,5.5 L16.4,5.5" fill="#f4f4f4" stroke="#c9c9c9" stroke-width="0.8"/></svg><div class="t" style="left:233px;top:1405.95px;font-size:10.5px;color:#111">download_picedit.html</div><svg style="position:absolute;left:403px;top:1396.65px" width="17" height="21" viewBox="0 0 17 21"><path d="M0.6,0.6 L11.5,0.6 L16.4,5.5 L16.4,20.4 L0.6,20.4 Z" fill="#fff" stroke="#c9c9c9" stroke-width="1"/><path d="M11.5,0.6 L11.5,5.5 L16.4,5.5" fill="#f4f4f4" stroke="#c9c9c9" stroke-width="0.8"/></svg><div class="t" style="left:425px;top:1405.95px;font-size:10.5px;color:#111">download_voidadd.html</div><svg style="position:absolute;left:595px;top:1396.65px" width="17" height="21" viewBox="0 0 17 21"><path d="M0.6,0.6 L11.5,0.6 L16.4,5.5 L16.4,20.4 L0.6,20.4 Z" fill="#fff" stroke="#c9c9c9" stroke-width="1"/><path d="M11.5,0.6 L11.5,5.5 L16.4,5.5" fill="#f4f4f4" stroke="#c9c9c9" stroke-width="0.8"/></svg><div class="t" style="left:617px;top:1405.95px;font-size:10.5px;color:#111">download_voidedit.html</div><svg style="position:absolute;left:19px;top:1423.2px" width="17" height="21" viewBox="0 0 17 21"><path d="M0.6,0.6 L11.5,0.6 L16.4,5.5 L16.4,20.4 L0.6,20.4 Z" fill="#fff" stroke="#c9c9c9" stroke-width="1"/><path d="M11.5,0.6 L11.5,5.5 L16.4,5.5" fill="#f4f4f4" stroke="#c9c9c9" stroke-width="0.8"/></svg><div class="t" style="left:41px;top:1432.5px;font-size:10.5px;color:#111">Home.html</div><svg style="position:absolute;left:211px;top:1423.2px" width="17" height="21" viewBox="0 0 17 21"><path d="M0.6,0.6 L11.5,0.6 L16.4,5.5 L16.4,20.4 L0.6,20.4 Z" fill="#fff" stroke="#c9c9c9" stroke-width="1"/><path d="M11.5,0.6 L11.5,5.5 L16.4,5.5" fill="#f4f4f4" stroke="#c9c9c9" stroke-width="0.8"/></svg><div class="t" style="left:233px;top:1432.5px;font-size:10.5px;color:#111">home_add.html</div><svg style="position:absolute;left:403px;top:1423.2px" width="17" height="21" viewBox="0 0 17 21"><path d="M0.6,0.6 L11.5,0.6 L16.4,5.5 L16.4,20.4 L0.6,20.4 Z" fill="#fff" stroke="#c9c9c9" stroke-width="1"/><path d="M11.5,0.6 L11.5,5.5 L16.4,5.5" fill="#f4f4f4" stroke="#c9c9c9" stroke-width="0.8"/></svg><div class="t" style="left:425px;top:1432.5px;font-size:10.5px;color:#111">home_edit.html</div><svg style="position:absolute;left:595px;top:1423.2px" width="17" height="21" viewBox="0 0 17 21"><path d="M0.6,0.6 L11.5,0.6 L16.4,5.5 L16.4,20.4 L0.6,20.4 Z" fill="#fff" stroke="#c9c9c9" stroke-width="1"/><path d="M11.5,0.6 L11.5,5.5 L16.4,5.5" fill="#f4f4f4" stroke="#c9c9c9" stroke-width="0.8"/></svg><div class="t" style="left:617px;top:1432.5px;font-size:10.5px;color:#111">index.html</div><svg style="position:absolute;left:19px;top:1449.75px" width="17" height="21" viewBox="0 0 17 21"><path d="M0.6,0.6 L11.5,0.6 L16.4,5.5 L16.4,20.4 L0.6,20.4 Z" fill="#fff" stroke="#c9c9c9" stroke-width="1"/><path d="M11.5,0.6 L11.5,5.5 L16.4,5.5" fill="#f4f4f4" stroke="#c9c9c9" stroke-width="0.8"/></svg><div class="t" style="left:41px;top:1459.05px;font-size:10.5px;color:#111">login.html</div><svg style="position:absolute;left:211px;top:1449.75px" width="17" height="21" viewBox="0 0 17 21"><path d="M0.6,0.6 L11.5,0.6 L16.4,5.5 L16.4,20.4 L0.6,20.4 Z" fill="#fff" stroke="#c9c9c9" stroke-width="1"/><path d="M11.5,0.6 L11.5,5.5 L16.4,5.5" fill="#f4f4f4" stroke="#c9c9c9" stroke-width="0.8"/></svg><div class="t" style="left:233px;top:1459.05px;font-size:10.5px;color:#111">main.html</div><svg style="position:absolute;left:403px;top:1449.75px" width="17" height="21" viewBox="0 0 17 21"><path d="M0.6,0.6 L11.5,0.6 L16.4,5.5 L16.4,20.4 L0.6,20.4 Z" fill="#fff" stroke="#c9c9c9" stroke-width="1"/><path d="M11.5,0.6 L11.5,5.5 L16.4,5.5" fill="#f4f4f4" stroke="#c9c9c9" stroke-width="0.8"/></svg><div class="t" style="left:425px;top:1459.05px;font-size:10.5px;color:#111">New.html</div><svg style="position:absolute;left:595px;top:1449.75px" width="17" height="21" viewBox="0 0 17 21"><path d="M0.6,0.6 L11.5,0.6 L16.4,5.5 L16.4,20.4 L0.6,20.4 Z" fill="#fff" stroke="#c9c9c9" stroke-width="1"/><path d="M11.5,0.6 L11.5,5.5 L16.4,5.5" fill="#f4f4f4" stroke="#c9c9c9" stroke-width="0.8"/></svg><div class="t" style="left:617px;top:1459.05px;font-size:10.5px;color:#111">new_add.html</div><svg style="position:absolute;left:19px;top:1476.3px" width="17" height="21" viewBox="0 0 17 21"><path d="M0.6,0.6 L11.5,0.6 L16.4,5.5 L16.4,20.4 L0.6,20.4 Z" fill="#fff" stroke="#c9c9c9" stroke-width="1"/><path d="M11.5,0.6 L11.5,5.5 L16.4,5.5" fill="#f4f4f4" stroke="#c9c9c9" stroke-width="0.8"/></svg><div class="t" style="left:41px;top:1485.6px;font-size:10.5px;color:#111">new_edit.html</div><svg style="position:absolute;left:211px;top:1476.3px" width="17" height="21" viewBox="0 0 17 21"><path d="M0.6,0.6 L11.5,0.6 L16.4,5.5 L16.4,20.4 L0.6,20.4 Z" fill="#fff" stroke="#c9c9c9" stroke-width="1"/><path d="M11.5,0.6 L11.5,5.5 L16.4,5.5" fill="#f4f4f4" stroke="#c9c9c9" stroke-width="0.8"/></svg><div class="t" style="left:233px;top:1485.6px;font-size:10.5px;color:#111">person_add.html</div><svg style="position:absolute;left:403px;top:1476.3px" width="17" height="21" viewBox="0 0 17 21"><path d="M0.6,0.6 L11.5,0.6 L16.4,5.5 L16.4,20.4 L0.6,20.4 Z" fill="#fff" stroke="#c9c9c9" stroke-width="1"/><path d="M11.5,0.6 L11.5,5.5 L16.4,5.5" fill="#f4f4f4" stroke="#c9c9c9" stroke-width="0.8"/></svg><div class="t" style="left:425px;top:1485.6px;font-size:10.5px;color:#111">person_look.html</div><svg style="position:absolute;left:595px;top:1476.3px" width="17" height="21" viewBox="0 0 17 21"><path d="M0.6,0.6 L11.5,0.6 L16.4,5.5 L16.4,20.4 L0.6,20.4 Z" fill="#fff" stroke="#c9c9c9" stroke-width="1"/><path d="M11.5,0.6 L11.5,5.5 L16.4,5.5" fill="#f4f4f4" stroke="#c9c9c9" stroke-width="0.8"/></svg><div class="t" style="left:617px;top:1485.6px;font-size:10.5px;color:#111">Role_management.html</div><svg style="position:absolute;left:19px;top:1502.85px" width="17" height="21" viewBox="0 0 17 21"><path d="M0.6,0.6 L11.5,0.6 L16.4,5.5 L16.4,20.4 L0.6,20.4 Z" fill="#fff" stroke="#c9c9c9" stroke-width="1"/><path d="M11.5,0.6 L11.5,5.5 L16.4,5.5" fill="#f4f4f4" stroke="#c9c9c9" stroke-width="0.8"/></svg><div class="t" style="left:41px;top:1512.1499999999999px;font-size:10.5px;color:#111">role_management_add.html</div><svg style="position:absolute;left:211px;top:1502.85px" width="17" height="21" viewBox="0 0 17 21"><path d="M0.6,0.6 L11.5,0.6 L16.4,5.5 L16.4,20.4 L0.6,20.4 Z" fill="#fff" stroke="#c9c9c9" stroke-width="1"/><path d="M11.5,0.6 L11.5,5.5 L16.4,5.5" fill="#f4f4f4" stroke="#c9c9c9" stroke-width="0.8"/></svg><div class="t" style="left:233px;top:1512.1499999999999px;font-size:10.5px;color:#111">role_management_edit.html</div><svg style="position:absolute;left:403px;top:1502.85px" width="17" height="21" viewBox="0 0 17 21"><path d="M0.6,0.6 L11.5,0.6 L16.4,5.5 L16.4,20.4 L0.6,20.4 Z" fill="#fff" stroke="#c9c9c9" stroke-width="1"/><path d="M11.5,0.6 L11.5,5.5 L16.4,5.5" fill="#f4f4f4" stroke="#c9c9c9" stroke-width="0.8"/></svg><div class="t" style="left:425px;top:1512.1499999999999px;font-size:10.5px;color:#111">role_management_look.html</div><svg style="position:absolute;left:595px;top:1502.85px" width="17" height="21" viewBox="0 0 17 21"><path d="M0.6,0.6 L11.5,0.6 L16.4,5.5 L16.4,20.4 L0.6,20.4 Z" fill="#fff" stroke="#c9c9c9" stroke-width="1"/><path d="M11.5,0.6 L11.5,5.5 L16.4,5.5" fill="#f4f4f4" stroke="#c9c9c9" stroke-width="0.8"/></svg><div class="t" style="left:617px;top:1512.1499999999999px;font-size:10.5px;color:#111">role_management_permissions....</div><svg style="position:absolute;left:19px;top:1529.4px" width="17" height="21" viewBox="0 0 17 21"><path d="M0.6,0.6 L11.5,0.6 L16.4,5.5 L16.4,20.4 L0.6,20.4 Z" fill="#fff" stroke="#c9c9c9" stroke-width="1"/><path d="M11.5,0.6 L11.5,5.5 L16.4,5.5" fill="#f4f4f4" stroke="#c9c9c9" stroke-width="0.8"/></svg><div class="t" style="left:41px;top:1538.7px;font-size:10.5px;color:#111">shujutongji.html</div><svg style="position:absolute;left:211px;top:1529.4px" width="17" height="21" viewBox="0 0 17 21"><path d="M0.6,0.6 L11.5,0.6 L16.4,5.5 L16.4,20.4 L0.6,20.4 Z" fill="#fff" stroke="#c9c9c9" stroke-width="1"/><path d="M11.5,0.6 L11.5,5.5 L16.4,5.5" fill="#f4f4f4" stroke="#c9c9c9" stroke-width="0.8"/></svg><div class="t" style="left:233px;top:1538.7px;font-size:10.5px;color:#111">sjtj_person_look.html</div><svg style="position:absolute;left:403px;top:1529.4px" width="17" height="21" viewBox="0 0 17 21"><path d="M0.6,0.6 L11.5,0.6 L16.4,5.5 L16.4,20.4 L0.6,20.4 Z" fill="#fff" stroke="#c9c9c9" stroke-width="1"/><path d="M11.5,0.6 L11.5,5.5 L16.4,5.5" fill="#f4f4f4" stroke="#c9c9c9" stroke-width="0.8"/></svg><div class="t" style="left:425px;top:1538.7px;font-size:10.5px;color:#111">User_management.html</div><svg style="position:absolute;left:595px;top:1529.4px" width="17" height="21" viewBox="0 0 17 21"><path d="M0.6,0.6 L11.5,0.6 L16.4,5.5 L16.4,20.4 L0.6,20.4 Z" fill="#fff" stroke="#c9c9c9" stroke-width="1"/><path d="M11.5,0.6 L11.5,5.5 L16.4,5.5" fill="#f4f4f4" stroke="#c9c9c9" stroke-width="0.8"/></svg><div class="t" style="left:617px;top:1538.7px;font-size:10.5px;color:#111">user_management_add.html</div><svg style="position:absolute;left:19px;top:1555.95px" width="17" height="21" viewBox="0 0 17 21"><path d="M0.6,0.6 L11.5,0.6 L16.4,5.5 L16.4,20.4 L0.6,20.4 Z" fill="#fff" stroke="#c9c9c9" stroke-width="1"/><path d="M11.5,0.6 L11.5,5.5 L16.4,5.5" fill="#f4f4f4" stroke="#c9c9c9" stroke-width="0.8"/></svg><div class="t" style="left:41px;top:1565.25px;font-size:10.5px;color:#111">user_management_edit.html</div><svg style="position:absolute;left:211px;top:1555.95px" width="17" height="21" viewBox="0 0 17 21"><path d="M0.6,0.6 L11.5,0.6 L16.4,5.5 L16.4,20.4 L0.6,20.4 Z" fill="#fff" stroke="#c9c9c9" stroke-width="1"/><path d="M11.5,0.6 L11.5,5.5 L16.4,5.5" fill="#f4f4f4" stroke="#c9c9c9" stroke-width="0.8"/></svg><div class="t" style="left:233px;top:1565.25px;font-size:10.5px;color:#111">user_management_password.ht...</div><svg style="position:absolute;left:403px;top:1555.95px" width="17" height="21" viewBox="0 0 17 21"><path d="M0.6,0.6 L11.5,0.6 L16.4,5.5 L16.4,20.4 L0.6,20.4 Z" fill="#fff" stroke="#c9c9c9" stroke-width="1"/><path d="M11.5,0.6 L11.5,5.5 L16.4,5.5" fill="#f4f4f4" stroke="#c9c9c9" stroke-width="0.8"/></svg><div class="t" style="left:425px;top:1565.25px;font-size:10.5px;color:#111">user_management_show.html</div><svg style="position:absolute;left:595px;top:1555.95px" width="17" height="21" viewBox="0 0 17 21"><path d="M0.6,0.6 L11.5,0.6 L16.4,5.5 L16.4,20.4 L0.6,20.4 Z" fill="#fff" stroke="#c9c9c9" stroke-width="1"/><path d="M11.5,0.6 L11.5,5.5 L16.4,5.5" fill="#f4f4f4" stroke="#c9c9c9" stroke-width="0.8"/></svg><div class="t" style="left:617px;top:1565.25px;font-size:10.5px;color:#111">Warning_management.html</div>
</body></html>
